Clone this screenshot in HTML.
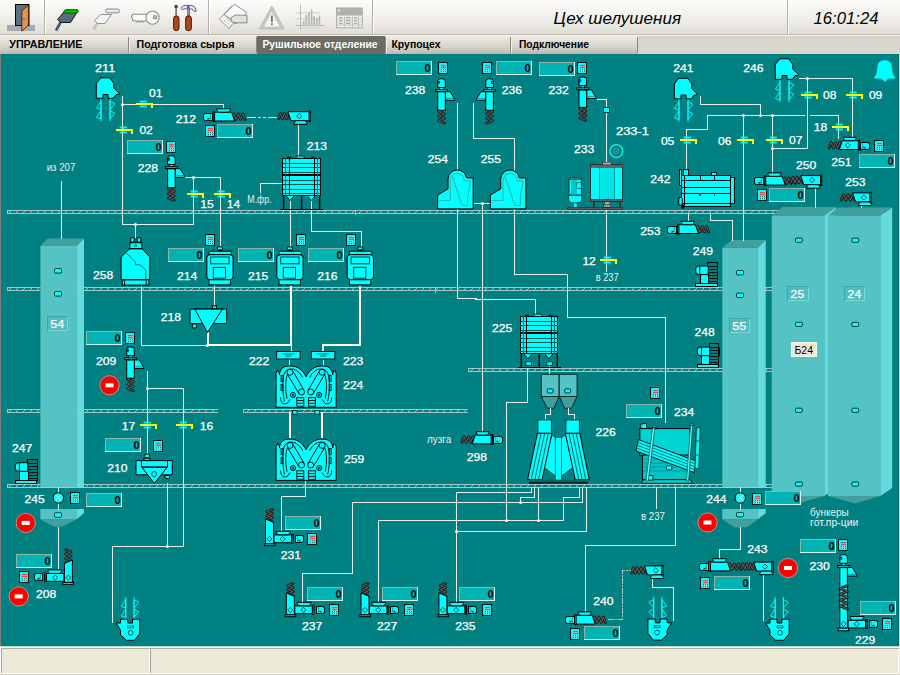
<!DOCTYPE html>
<html><head><meta charset="utf-8"><title>Цех шелушения</title>
<style>html,body{margin:0;padding:0;background:#ECE9D8;overflow:hidden}svg{display:block}text{white-space:pre}</style></head><body>
<svg width="900" height="675" viewBox="0 0 900 675">
<defs><linearGradient id="tb" x1="0" y1="0" x2="0" y2="1"><stop offset="0" stop-color="#FDFCFB"/><stop offset="0.5" stop-color="#F1EFEB"/><stop offset="1" stop-color="#DDDAD2"/></linearGradient><linearGradient id="tab" x1="0" y1="0" x2="0" y2="1"><stop offset="0" stop-color="#EDEBE5"/><stop offset="0.6" stop-color="#D6D3CA"/><stop offset="1" stop-color="#BCB9B0"/></linearGradient><pattern id="hatch0" x="7" y="0" width="7" height="4" patternUnits="userSpaceOnUse"><rect x="2" y="2" width="1" height="1" fill="#A9C6C6"/><rect x="3" y="1" width="1" height="1" fill="#A9C6C6"/></pattern><pattern id="hatch1" x="7" y="1" width="7" height="4" patternUnits="userSpaceOnUse"><rect x="2" y="2" width="1" height="1" fill="#A9C6C6"/><rect x="3" y="1" width="1" height="1" fill="#A9C6C6"/></pattern><pattern id="hatch2" x="7" y="2" width="7" height="4" patternUnits="userSpaceOnUse"><rect x="2" y="2" width="1" height="1" fill="#A9C6C6"/><rect x="3" y="1" width="1" height="1" fill="#A9C6C6"/></pattern><pattern id="hatch3" x="7" y="3" width="7" height="4" patternUnits="userSpaceOnUse"><rect x="2" y="2" width="1" height="1" fill="#A9C6C6"/><rect x="3" y="1" width="1" height="1" fill="#A9C6C6"/></pattern></defs>
<rect x="0" y="0" width="900" height="36" fill="url(#tb)"/>
<rect x="0" y="34" width="900" height="1" fill="#BEBAB0"/><rect x="0" y="35" width="900" height="1" fill="#F4F2EC"/>
<rect x="44" y="0" width="1" height="34" fill="#B4B1A8"/><rect x="45" y="0" width="1" height="34" fill="#FFFFFF"/>
<rect x="208" y="0" width="1" height="34" fill="#B4B1A8"/><rect x="209" y="0" width="1" height="34" fill="#FFFFFF"/>
<rect x="372" y="0" width="1" height="34" fill="#B4B1A8"/><rect x="373" y="0" width="1" height="34" fill="#FFFFFF"/>
<rect x="787" y="0" width="1" height="34" fill="#B4B1A8"/><rect x="788" y="0" width="1" height="34" fill="#FFFFFF"/>
<rect x="0" y="36" width="900" height="18" fill="url(#tab)"/>
<rect x="128" y="37" width="1" height="16" fill="#8C8980"/><rect x="129" y="37" width="1" height="16" fill="#F0EEE8"/>
<rect x="256" y="37" width="1" height="16" fill="#8C8980"/><rect x="257" y="37" width="1" height="16" fill="#F0EEE8"/>
<rect x="385" y="37" width="1" height="16" fill="#8C8980"/><rect x="386" y="37" width="1" height="16" fill="#F0EEE8"/>
<rect x="510" y="37" width="1" height="16" fill="#8C8980"/><rect x="511" y="37" width="1" height="16" fill="#F0EEE8"/>
<rect x="637" y="37" width="1" height="16" fill="#8C8980"/><rect x="638" y="37" width="1" height="16" fill="#F0EEE8"/>
<rect x="638" y="36" width="262" height="18" fill="#D8D5CC"/>
<rect x="257" y="36" width="128" height="18" fill="#6C6B64"/>
<text x="9.2" y="48.1" font-family="Liberation Sans, sans-serif" font-size="10" font-weight="bold" font-style="normal" fill="#000" text-anchor="start" textLength="73.3" lengthAdjust="spacingAndGlyphs">УПРАВЛЕНИЕ</text>
<text x="136.5" y="48.1" font-family="Liberation Sans, sans-serif" font-size="10" font-weight="bold" font-style="normal" fill="#000" text-anchor="start" textLength="98" lengthAdjust="spacingAndGlyphs">Подготовка сырья</text>
<text x="262.5" y="48.1" font-family="Liberation Sans, sans-serif" font-size="10" font-weight="bold" font-style="normal" fill="#fff" text-anchor="start" textLength="115" lengthAdjust="spacingAndGlyphs">Рушильное отделение</text>
<text x="391.5" y="48.1" font-family="Liberation Sans, sans-serif" font-size="10" font-weight="bold" font-style="normal" fill="#000" text-anchor="start" textLength="49" lengthAdjust="spacingAndGlyphs">Крупоцех</text>
<text x="519" y="48.1" font-family="Liberation Sans, sans-serif" font-size="10" font-weight="bold" font-style="normal" fill="#000" text-anchor="start" textLength="70" lengthAdjust="spacingAndGlyphs">Подключение</text>
<text x="553.5" y="23.5" font-family="Liberation Sans, sans-serif" font-size="16.8" font-weight="normal" font-style="italic" fill="#000" text-anchor="start" textLength="127.5" lengthAdjust="spacingAndGlyphs">Цех шелушения</text>
<text x="813.5" y="23.5" font-family="Liberation Sans, sans-serif" font-size="16.8" font-weight="normal" font-style="italic" fill="#000" text-anchor="start" textLength="65" lengthAdjust="spacingAndGlyphs">16:01:24</text>
<rect x="7" y="25" width="28" height="6" fill="#A4ACB4"/>
<rect x="15.5" y="4.5" width="13.5" height="21" fill="#5E7084" stroke="#000" stroke-width="1"/>
<polygon points="21.8,11 28.4,5 28.4,25 21.8,31.2" fill="#E8984C" stroke="#402000" stroke-width="0.9"/>
<circle cx="24.3" cy="19.2" r="1.1" fill="#9CC4D8" stroke="#404040" stroke-width="0.5"/>
<path d="M56,30.5 L61,21.5" stroke="#485868" stroke-width="2.6" fill="none"/>
<polygon points="57.5,19.5 65,10.8 78,10.8 70.5,22.5 61,22.5" fill="#586C7C" stroke="#101820" stroke-width="1"/>
<polygon points="64.2,10.6 66,9.6 77.5,9.6 78.3,11.2 76.8,13.2 63.2,13" fill="#00C000" stroke="#003000" stroke-width="0.7"/>
<path d="M93.5,29.5 L98.5,21.5" stroke="#909090" stroke-width="2.2" fill="none"/><path d="M93.5,29.5 L98.5,21.5" stroke="#fff" stroke-width="0.9" fill="none"/>
<polygon points="94.5,20.5 101,14.5 111.5,14.5 105,23.5 97.5,23.5" fill="#F4F4F4" stroke="#888" stroke-width="0.9"/>
<rect x="105.5" y="9" width="14" height="3.8" rx="1.6" fill="#E8E8E8" stroke="#808080" stroke-width="0.9"/>
<g fill="#FAFAF8" stroke="#8C8C88" stroke-width="1.1"><path d="M131.5,16 L133,14.2 H147 V21 H144 L143,22 L141.5,20.8 L140,22 L138.5,20.8 L137,22 L135.5,20.8 H133 Z"/><circle cx="152.5" cy="17.6" r="6.6"/><circle cx="155" cy="17.2" r="1.7" fill="#C8C8C4"/></g>
<rect x="175.3" y="7" width="1.6" height="9.5" fill="#707070"/><rect x="174.6" y="5" width="3" height="3" fill="#404040"/>
<rect x="173.6" y="16" width="5.4" height="14.6" rx="2.4" fill="#A84A1C" stroke="#401000" stroke-width="0.9"/>
<rect x="187.6" y="9" width="2.2" height="8" fill="#9098A0" stroke="#404040" stroke-width="0.5"/>
<rect x="185.6" y="16" width="5.8" height="14.6" rx="2.4" fill="#A84A1C" stroke="#401000" stroke-width="0.9"/>
<path d="M181,8.2 L183.5,5.4 H192 Q195.8,6.5 196.3,11 L194,11.6 Q193,8.8 190.6,8.8 H184 L182.6,10 Z" fill="#E4E8EC" stroke="#505860" stroke-width="0.9"/><circle cx="188.3" cy="7" r="1.2" fill="#2040E0"/>
<g fill="#FAFAFA" stroke="#808080" stroke-width="0.9"><polygon points="219.5,19 231,6.5 240.5,14 229,28.5"/><polygon points="224,14.5 234.5,4.2 246.8,12.6 236,24"/><path d="M231,17.5 Q236,13.5 240,15.2 L247,15.2 V22.8 H238 Q233.5,23.5 231,21 Z" fill="#E0E0DC"/></g>
<g stroke="#9A9A9A" stroke-width="0.7"><line x1="223.5" y1="19.5" x2="229.5" y2="24.8"/><line x1="225.3" y1="17.4" x2="231.3" y2="22.6"/><line x1="227" y1="15.5" x2="231" y2="19"/></g>
<polygon points="271.8,6 284.2,29 259.4,29" fill="#C6C6C2" stroke="#BCBCB8" stroke-width="1"/><polygon points="271.8,12 279.4,26.4 264.2,26.4" fill="#F4F4F2"/>
<rect x="271" y="15.5" width="1.8" height="6.4" fill="#707070"/><rect x="271" y="23.2" width="1.8" height="1.9" fill="#707070"/>
<g fill="#B8B8B4"><rect x="300" y="4.5" width="1" height="25"/><rect x="296" y="25" width="28.5" height="1"/><rect x="296" y="12.5" width="24" height="0.8" fill="#C8C8C4"/><rect x="296" y="18.5" width="24" height="0.8" fill="#C8C8C4"/><rect x="303" y="21" width="1.6" height="4"/><rect x="305.6" y="15" width="1.6" height="10"/><rect x="308.2" y="12" width="1.6" height="13"/><rect x="310.8" y="9.5" width="1.6" height="15.5"/><rect x="313.4" y="16" width="1.6" height="9"/><rect x="316" y="18" width="1.6" height="7"/><rect x="318.6" y="15.5" width="1.6" height="9.5"/><rect x="302" y="27" width="18" height="1.6" fill="#D4D4D0"/></g>
<rect x="336.5" y="8" width="25.8" height="19.8" fill="#F0F0EE" stroke="#A8A8A4" stroke-width="0.9"/><rect x="336.5" y="8" width="25.8" height="7.5" fill="#B0B0AC"/><rect x="338" y="9.3" width="2.2" height="2.2" fill="#E8E8E4"/>
<g fill="#B8B8B4"><rect x="337" y="18.6" width="25" height="0.8"/><rect x="337" y="21.6" width="25" height="0.8"/><rect x="337" y="24.6" width="25" height="0.8"/><rect x="344" y="15.5" width="0.8" height="12"/><rect x="352" y="15.5" width="0.8" height="12"/><rect x="358" y="15.5" width="0.8" height="12"/></g>
<g fill="#A0A09C"><rect x="339" y="17" width="3.5" height="0.9"/><rect x="346" y="17" width="4.5" height="0.9"/><rect x="354" y="17" width="3" height="0.9"/><rect x="339" y="20" width="3.5" height="0.9"/><rect x="346" y="20" width="4.5" height="0.9"/><rect x="354" y="20" width="3" height="0.9"/><rect x="339" y="23" width="3.5" height="0.9"/><rect x="346" y="23" width="4.5" height="0.9"/><rect x="354" y="23" width="3" height="0.9"/></g>
<rect x="0" y="54" width="900" height="593" fill="#808080"/>
<rect x="1" y="54" width="898" height="593" fill="#008080" />
<rect x="898" y="54" width="1" height="592" fill="#006868"/><rect x="899" y="54" width="1" height="592" fill="#D8D8D0"/>
<g shape-rendering="crispEdges"><rect x="7" y="210" width="783" height="4" fill="url(#hatch2)"/><rect x="7" y="210" width="783" height="1" fill="#A9C6C6"/><rect x="7" y="213" width="783" height="1" fill="#A9C6C6"/><rect x="7" y="210" width="1" height="4" fill="#A9C6C6"/></g>
<g shape-rendering="crispEdges"><rect x="7" y="287" width="765" height="4" fill="url(#hatch3)"/><rect x="7" y="287" width="765" height="1" fill="#A9C6C6"/><rect x="7" y="290" width="765" height="1" fill="#A9C6C6"/><rect x="7" y="287" width="1" height="4" fill="#A9C6C6"/></g>
<g shape-rendering="crispEdges"><rect x="7" y="409" width="211" height="4" fill="url(#hatch1)"/><rect x="7" y="409" width="211" height="1" fill="#A9C6C6"/><rect x="7" y="412" width="211" height="1" fill="#A9C6C6"/><rect x="7" y="409" width="1" height="4" fill="#A9C6C6"/></g>
<g shape-rendering="crispEdges"><rect x="243" y="409" width="225" height="4" fill="url(#hatch1)"/><rect x="243" y="409" width="225" height="1" fill="#A9C6C6"/><rect x="243" y="412" width="225" height="1" fill="#A9C6C6"/><rect x="243" y="409" width="1" height="4" fill="#A9C6C6"/></g>
<g shape-rendering="crispEdges"><rect x="468" y="368" width="304" height="4" fill="url(#hatch0)"/><rect x="468" y="368" width="304" height="1" fill="#A9C6C6"/><rect x="468" y="371" width="304" height="1" fill="#A9C6C6"/><rect x="468" y="368" width="1" height="4" fill="#A9C6C6"/></g>
<g shape-rendering="crispEdges"><rect x="7" y="484" width="765" height="4" fill="url(#hatch0)"/><rect x="7" y="484" width="765" height="1" fill="#A9C6C6"/><rect x="7" y="487" width="765" height="1" fill="#A9C6C6"/><rect x="7" y="484" width="1" height="4" fill="#A9C6C6"/></g>
<rect x="435" y="288" width="1" height="5" fill="#A9C6C6" shape-rendering="crispEdges"/><rect x="355" y="211" width="1" height="4" fill="#A9C6C6" shape-rendering="crispEdges"/>
<polygon points="40.40,246.00 76.50,246.00 76.50,487.00 40.40,487.00" fill="#55C2C4" />
<polygon points="76.50,246.00 84.00,238.50 84.00,487.00 76.50,487.00" fill="#66DADC" />
<polygon points="40.40,246.00 47.40,238.50 84.00,238.50 76.50,246.00" fill="#419FA0" />
<polygon points="722.30,247.70 757.80,247.70 757.80,487.00 722.30,487.00" fill="#55C2C4" />
<polygon points="757.80,247.70 765.70,240.00 765.70,487.00 757.80,487.00" fill="#66DADC" />
<polygon points="722.30,247.70 732.00,240.00 765.70,240.00 757.80,247.70" fill="#419FA0" />
<polygon points="771.70,215.50 824.30,215.50 824.30,496.00 771.70,496.00" fill="#55C2C4" />
<polygon points="824.30,215.50 836.00,207.00 836.00,488.00 824.30,496.00" fill="#66DADC" />
<polygon points="771.70,215.50 782.60,207.00 836.00,207.00 824.30,215.50" fill="#419FA0" />
<polygon points="771.70,496.00 824.30,496.00 798.00,503.50" fill="#419FA0" />
<polygon points="828.00,215.50 880.30,215.50 880.30,496.00 828.00,496.00" fill="#55C2C4" />
<polygon points="880.30,215.50 892.20,207.50 892.20,488.00 880.30,496.00" fill="#66DADC" />
<polygon points="828.00,215.50 838.00,207.50 892.20,207.50 880.30,215.50" fill="#419FA0" />
<polygon points="828.00,496.00 880.30,496.00 855.00,503.50" fill="#419FA0" />
<polygon points="40.40,509.00 76.30,509.00 76.30,519.40 40.40,519.40" fill="#55C2C4" />
<polygon points="76.30,509.00 84.00,509.00 84.00,513.20 76.30,519.40" fill="#66DADC" />
<polygon points="40.40,519.40 76.30,519.40 62.20,526.80 54.40,526.80" fill="#419FA0" />
<polygon points="722.30,509.00 757.80,509.00 757.80,519.20 722.30,519.20" fill="#55C2C4" />
<polygon points="757.80,509.00 765.70,509.00 765.70,513.20 757.80,519.20" fill="#66DADC" />
<polygon points="722.30,519.20 757.80,519.20 747.20,527.20 734.30,527.20" fill="#419FA0" />
<rect x="54.5" y="268.5" width="7" height="4.600000000000023" fill="#00FFFF" stroke="#003838" stroke-width="1" rx="1"/>
<rect x="54.5" y="291.5" width="7" height="4.600000000000023" fill="#00FFFF" stroke="#003838" stroke-width="1" rx="1"/>
<rect x="54.5" y="512.7" width="7" height="4.600000000000023" fill="#00FFFF" stroke="#003838" stroke-width="1" rx="1"/>
<rect x="736.5" y="270.5" width="7" height="4.399999999999977" fill="#00FFFF" stroke="#003838" stroke-width="1" rx="1"/>
<rect x="736.5" y="293.1" width="7" height="4.399999999999977" fill="#00FFFF" stroke="#003838" stroke-width="1" rx="1"/>
<rect x="736.5" y="512.5" width="7" height="4.399999999999977" fill="#00FFFF" stroke="#003838" stroke-width="1" rx="1"/>
<rect x="795.5" y="238.1" width="6.7999999999999545" height="4.199999999999989" fill="#00FFFF" stroke="#003838" stroke-width="1" rx="1"/>
<rect x="795.5" y="322.3" width="6.7999999999999545" height="4.199999999999989" fill="#00FFFF" stroke="#003838" stroke-width="1" rx="1"/>
<rect x="795.5" y="408.2" width="6.7999999999999545" height="4.199999999999989" fill="#00FFFF" stroke="#003838" stroke-width="1" rx="1"/>
<rect x="795.5" y="482.0" width="6.7999999999999545" height="4.199999999999989" fill="#00FFFF" stroke="#003838" stroke-width="1" rx="1"/>
<rect x="851.9" y="238.1" width="6.7999999999999545" height="4.199999999999989" fill="#00FFFF" stroke="#003838" stroke-width="1" rx="1"/>
<rect x="851.9" y="322.3" width="6.7999999999999545" height="4.199999999999989" fill="#00FFFF" stroke="#003838" stroke-width="1" rx="1"/>
<rect x="851.9" y="408.2" width="6.7999999999999545" height="4.199999999999989" fill="#00FFFF" stroke="#003838" stroke-width="1" rx="1"/>
<rect x="851.9" y="482.0" width="6.7999999999999545" height="4.199999999999989" fill="#00FFFF" stroke="#003838" stroke-width="1" rx="1"/>
<rect x="47.5" y="316.5" width="20" height="14" fill="#50BCBE" stroke="#3FA4A6" stroke-width="1" shape-rendering="crispEdges"/>
<rect x="48" y="330" width="20" height="1" fill="#78D8DA" shape-rendering="crispEdges"/><rect x="67" y="317" width="1" height="14" fill="#78D8DA" shape-rendering="crispEdges"/>
<text x="50.6" y="327.6" font-family="Liberation Sans, sans-serif" font-size="10.4" font-weight="normal" fill="#fff" stroke="#fff" stroke-width="0.25" textLength="13.6" lengthAdjust="spacingAndGlyphs">54</text>
<rect x="729.5" y="318.5" width="20" height="14" fill="#50BCBE" stroke="#3FA4A6" stroke-width="1" shape-rendering="crispEdges"/>
<rect x="730" y="332" width="20" height="1" fill="#78D8DA" shape-rendering="crispEdges"/><rect x="749" y="319" width="1" height="14" fill="#78D8DA" shape-rendering="crispEdges"/>
<text x="732.6" y="329.6" font-family="Liberation Sans, sans-serif" font-size="10.4" font-weight="normal" fill="#fff" stroke="#fff" stroke-width="0.25" textLength="13.6" lengthAdjust="spacingAndGlyphs">55</text>
<rect x="787.5" y="286.5" width="21" height="14" fill="#50BCBE" stroke="#3FA4A6" stroke-width="1" shape-rendering="crispEdges"/>
<rect x="788" y="300" width="21" height="1" fill="#78D8DA" shape-rendering="crispEdges"/><rect x="808" y="287" width="1" height="14" fill="#78D8DA" shape-rendering="crispEdges"/>
<text x="790.6" y="297.6" font-family="Liberation Sans, sans-serif" font-size="10.4" font-weight="normal" fill="#fff" stroke="#fff" stroke-width="0.25" textLength="13.6" lengthAdjust="spacingAndGlyphs">25</text>
<rect x="844.5" y="286.5" width="20" height="14" fill="#50BCBE" stroke="#3FA4A6" stroke-width="1" shape-rendering="crispEdges"/>
<rect x="845" y="300" width="20" height="1" fill="#78D8DA" shape-rendering="crispEdges"/><rect x="864" y="287" width="1" height="14" fill="#78D8DA" shape-rendering="crispEdges"/>
<text x="847.6" y="297.6" font-family="Liberation Sans, sans-serif" font-size="10.4" font-weight="normal" fill="#fff" stroke="#fff" stroke-width="0.25" textLength="13.6" lengthAdjust="spacingAndGlyphs">24</text>
<rect x="791.5" y="342.5" width="25" height="14" fill="#ECE9D8" stroke="#F8F8F0" stroke-width="1"/>
<text x="794.5" y="353.8" font-family="Liberation Sans, sans-serif" font-size="10" font-weight="normal" font-style="normal" fill="#000" text-anchor="start" textLength="18.5" lengthAdjust="spacingAndGlyphs">Б24</text>
<polyline points="122.5,96.5 122.5,224.5" fill="none" stroke="#E6F0F0" stroke-width="1" stroke-linecap="square" shape-rendering="crispEdges"/>
<polyline points="122.5,104.5 223.5,104.5 223.5,109.5" fill="none" stroke="#E6F0F0" stroke-width="1" stroke-linecap="square" shape-rendering="crispEdges"/>
<circle cx="122.5" cy="104.5" r="1.5" fill="#fff"/>
<polyline points="122.5,224.5 193.5,224.5 193.5,177.5" fill="none" stroke="#E6F0F0" stroke-width="1" stroke-linecap="square" shape-rendering="crispEdges"/>
<polyline points="185.5,177.5 220.5,177.5 220.5,246.5" fill="none" stroke="#E6F0F0" stroke-width="1" stroke-linecap="square" shape-rendering="crispEdges"/>
<circle cx="193.5" cy="177.5" r="1.5" fill="#fff"/>
<polyline points="135.5,224.5 135.5,237.5" fill="none" stroke="#E6F0F0" stroke-width="1" stroke-linecap="square" shape-rendering="crispEdges"/>
<circle cx="135.5" cy="224.5" r="1.5" fill="#fff"/>
<polyline points="61.5,181.5 61.5,238.5" fill="none" stroke="#E6F0F0" stroke-width="1" stroke-linecap="square" shape-rendering="crispEdges"/>
<polyline points="298.5,124.5 298.5,157.5" fill="none" stroke="#E6F0F0" stroke-width="1" stroke-linecap="square" shape-rendering="crispEdges"/>
<polyline points="260.5,192.5 260.5,183.5 281.5,183.5" fill="none" stroke="#E6F0F0" stroke-width="1" stroke-linecap="square" shape-rendering="crispEdges"/>
<polyline points="290.5,200.5 290.5,246.5" fill="none" stroke="#E6F0F0" stroke-width="1" stroke-linecap="square" shape-rendering="crispEdges"/>
<polyline points="311.5,200.5 311.5,231.5 361.5,231.5 361.5,246.5" fill="none" stroke="#E6F0F0" stroke-width="1" stroke-linecap="square" shape-rendering="crispEdges"/>
<polyline points="214.5,285.5 214.5,305.5" fill="none" stroke="#E6F0F0" stroke-width="1" stroke-linecap="square" shape-rendering="crispEdges"/>
<polyline points="141.5,286.5 141.5,345.5 207.5,345.5" fill="none" stroke="#E6F0F0" stroke-width="1" stroke-linecap="square" shape-rendering="crispEdges"/>
<g fill="#fff" shape-rendering="crispEdges">
<rect x="207" y="332" width="2" height="14"/><rect x="207" y="344" width="85" height="2"/>
<rect x="290" y="286" width="2" height="60"/><rect x="291" y="346" width="1" height="5"/>
<rect x="359" y="286" width="2" height="60"/><rect x="322" y="344" width="39" height="2"/><rect x="322" y="344" width="2" height="7"/>
<rect x="289" y="412" width="2" height="26"/><rect x="321" y="412" width="2" height="26"/>
</g>
<circle cx="207.5" cy="345.5" r="1.5" fill="#fff"/>
<polyline points="289.5,359.5 289.5,365.5" fill="none" stroke="#C8E4E4" stroke-width="1" stroke-linecap="square" shape-rendering="crispEdges"/>
<polyline points="323.5,359.5 323.5,365.5" fill="none" stroke="#C8E4E4" stroke-width="1" stroke-linecap="square" shape-rendering="crispEdges"/>
<polyline points="305.5,481.5 305.5,496.5 281.5,496.5 281.5,531.5" fill="none" stroke="#E6F0F0" stroke-width="1" stroke-linecap="square" shape-rendering="crispEdges"/>
<polyline points="147.5,371.5 147.5,453.5" fill="none" stroke="#E6F0F0" stroke-width="1" stroke-linecap="square" shape-rendering="crispEdges"/>
<polyline points="147.5,388.5 183.5,388.5 183.5,546.5" fill="none" stroke="#E6F0F0" stroke-width="1" stroke-linecap="square" shape-rendering="crispEdges"/>
<circle cx="147.5" cy="388.5" r="1.5" fill="#fff"/>
<polyline points="167.5,483.5 167.5,546.5" fill="none" stroke="#E6F0F0" stroke-width="1" stroke-linecap="square" shape-rendering="crispEdges"/>
<polyline points="183.5,546.5 112.5,546.5 112.5,622.5" fill="none" stroke="#E6F0F0" stroke-width="1" stroke-linecap="square" shape-rendering="crispEdges"/>
<circle cx="167.5" cy="546.5" r="1.5" fill="#fff"/>
<polyline points="58.5,487.5 58.5,509.5" fill="none" stroke="#E6F0F0" stroke-width="1" stroke-linecap="square" shape-rendering="crispEdges"/>
<polyline points="58.5,527.5 58.5,569.5" fill="none" stroke="#E6F0F0" stroke-width="1" stroke-linecap="square" shape-rendering="crispEdges"/>
<polyline points="457.5,103.5 457.5,170.5" fill="none" stroke="#E6F0F0" stroke-width="1" stroke-linecap="square" shape-rendering="crispEdges"/>
<polyline points="457.5,209.5 457.5,298.5 476.5,298.5" fill="none" stroke="#E6F0F0" stroke-width="1" stroke-linecap="square" shape-rendering="crispEdges"/>
<polyline points="475.5,299.5 535.5,299.5 535.5,314.5" fill="none" stroke="#E6F0F0" stroke-width="1" stroke-linecap="square" shape-rendering="crispEdges"/>
<polyline points="473.5,103.5 473.5,138.5 514.5,138.5 514.5,170.5" fill="none" stroke="#E6F0F0" stroke-width="1" stroke-linecap="square" shape-rendering="crispEdges"/>
<polyline points="514.5,209.5 514.5,274.5 567.5,274.5 567.5,317.5 665.5,317.5 665.5,422.5" fill="none" stroke="#E6F0F0" stroke-width="1" stroke-linecap="square" shape-rendering="crispEdges"/>
<polyline points="473.5,203.5 490.5,203.5" fill="none" stroke="#E6F0F0" stroke-width="1" stroke-linecap="square" shape-rendering="crispEdges"/>
<polyline points="482.5,203.5 482.5,431.5" fill="none" stroke="#E6F0F0" stroke-width="1" stroke-linecap="square" shape-rendering="crispEdges"/>
<circle cx="482.5" cy="203.5" r="1.5" fill="#fff"/>
<polyline points="597.5,99.5 606.5,99.5 606.5,162.5" fill="none" stroke="#E6F0F0" stroke-width="1" stroke-linecap="square" shape-rendering="crispEdges"/>
<polyline points="606.5,210.5 606.5,271.5" fill="none" stroke="#E6F0F0" stroke-width="1" stroke-linecap="square" shape-rendering="crispEdges"/>
<rect x="603.5" y="107.5" width="6" height="5" fill="#00FFFF" stroke="#003838" stroke-width="1" shape-rendering="crispEdges"/>
<polyline points="700.5,96.5 700.5,104.5 760.5,104.5 760.5,115.5" fill="none" stroke="#E6F0F0" stroke-width="1" stroke-linecap="square" shape-rendering="crispEdges"/>
<polyline points="707.5,115.5 804.5,115.5" fill="none" stroke="#E6F0F0" stroke-width="1" stroke-linecap="square" shape-rendering="crispEdges"/>
<polyline points="810.5,115.5 838.5,115.5 838.5,138.5" fill="none" stroke="#E6F0F0" stroke-width="1" stroke-linecap="square" shape-rendering="crispEdges"/>
<polyline points="707.5,115.5 707.5,129.5 686.5,129.5 686.5,169.5" fill="none" stroke="#E6F0F0" stroke-width="1" stroke-linecap="square" shape-rendering="crispEdges"/>
<polyline points="743.5,115.5 743.5,240.5" fill="none" stroke="#E6F0F0" stroke-width="1" stroke-linecap="square" shape-rendering="crispEdges"/>
<polyline points="772.5,115.5 772.5,172.5" fill="none" stroke="#E6F0F0" stroke-width="1" stroke-linecap="square" shape-rendering="crispEdges"/>
<polyline points="772.5,148.5 807.5,148.5 807.5,78.5" fill="none" stroke="#E6F0F0" stroke-width="1" stroke-linecap="square" shape-rendering="crispEdges"/>
<polyline points="799.5,78.5 852.5,78.5 852.5,138.5" fill="none" stroke="#E6F0F0" stroke-width="1" stroke-linecap="square" shape-rendering="crispEdges"/>
<circle cx="743.5" cy="115.5" r="1.5" fill="#fff"/>
<circle cx="760.5" cy="115.5" r="1.5" fill="#fff"/>
<circle cx="772.5" cy="115.5" r="1.5" fill="#fff"/>
<circle cx="772.5" cy="148.5" r="1.5" fill="#fff"/>
<circle cx="807.5" cy="78.5" r="1.5" fill="#fff"/>
<polyline points="815.5,187.5 815.5,207.5" fill="none" stroke="#E6F0F0" stroke-width="1" stroke-linecap="square" shape-rendering="crispEdges"/>
<polyline points="861.5,205.5 861.5,207.5" fill="none" stroke="#E6F0F0" stroke-width="1" stroke-linecap="square" shape-rendering="crispEdges"/>
<polyline points="688.5,213.5 688.5,221.5" fill="none" stroke="#E6F0F0" stroke-width="1" stroke-linecap="square" shape-rendering="crispEdges"/>
<polyline points="710.5,213.5 710.5,220.5 732.5,220.5 732.5,240.5" fill="none" stroke="#E6F0F0" stroke-width="1" stroke-linecap="square" shape-rendering="crispEdges"/>
<polyline points="527.5,367.5 527.5,402.5 506.5,402.5 506.5,520.5" fill="none" stroke="#E6F0F0" stroke-width="1" stroke-linecap="square" shape-rendering="crispEdges"/>
<polyline points="549.5,365.5 549.5,374.5" fill="none" stroke="#E6F0F0" stroke-width="1" stroke-linecap="square" shape-rendering="crispEdges"/>
<polyline points="531.5,487.5 531.5,492.5 456.5,492.5 456.5,602.5" fill="none" stroke="#E6F0F0" stroke-width="1" stroke-linecap="square" shape-rendering="crispEdges"/>
<polyline points="534.5,487.5 534.5,497.5 520.5,497.5 520.5,502.5" fill="none" stroke="#E6F0F0" stroke-width="1" stroke-linecap="square" shape-rendering="crispEdges"/>
<polyline points="582.5,487.5 582.5,502.5 352.5,502.5 352.5,573.5 302.5,573.5 302.5,602.5" fill="none" stroke="#E6F0F0" stroke-width="1" stroke-linecap="square" shape-rendering="crispEdges"/>
<polyline points="538.5,487.5 538.5,520.5" fill="none" stroke="#E6F0F0" stroke-width="1" stroke-linecap="square" shape-rendering="crispEdges"/>
<polyline points="579.5,487.5 579.5,497.5 563.5,497.5 563.5,520.5 378.5,520.5 378.5,602.5" fill="none" stroke="#E6F0F0" stroke-width="1" stroke-linecap="square" shape-rendering="crispEdges"/>
<polyline points="586.5,487.5 586.5,531.5 456.5,531.5" fill="none" stroke="#E6F0F0" stroke-width="1" stroke-linecap="square" shape-rendering="crispEdges"/>
<circle cx="520.5" cy="502.5" r="1.5" fill="#fff"/>
<circle cx="538.5" cy="520.5" r="1.5" fill="#fff"/>
<circle cx="506.5" cy="520.5" r="1.5" fill="#fff"/>
<circle cx="456.5" cy="531.5" r="1.5" fill="#fff"/>
<polyline points="656.5,487.5 656.5,508.5" fill="none" stroke="#E6F0F0" stroke-width="1" stroke-linecap="square" shape-rendering="crispEdges"/>
<polyline points="675.5,487.5 675.5,545.5 585.5,545.5 585.5,612.5" fill="none" stroke="#E6F0F0" stroke-width="1" stroke-linecap="square" shape-rendering="crispEdges"/>
<polyline points="608.5,619.5 622.5,619.5 622.5,570.5 630.5,570.5" fill="none" stroke="#A8C8C8" stroke-width="1" stroke-linecap="square" shape-rendering="crispEdges" stroke-dasharray="5,2,1,2"/>
<polyline points="652.5,578.5 652.5,587.5 673.5,587.5 673.5,620.5" fill="none" stroke="#E6F0F0" stroke-width="1" stroke-linecap="square" shape-rendering="crispEdges"/>
<polyline points="740.5,487.5 740.5,509.5" fill="none" stroke="#E6F0F0" stroke-width="1" stroke-linecap="square" shape-rendering="crispEdges"/>
<polyline points="740.5,527.5 740.5,549.5 719.5,549.5 719.5,559.5" fill="none" stroke="#E6F0F0" stroke-width="1" stroke-linecap="square" shape-rendering="crispEdges"/>
<polyline points="763.5,574.5 763.5,620.5" fill="none" stroke="#E6F0F0" stroke-width="1" stroke-linecap="square" shape-rendering="crispEdges"/>
<polyline points="247.5,117.5 277.5,117.5" fill="none" stroke="#C8E0E0" stroke-width="1" stroke-linecap="square" shape-rendering="crispEdges" stroke-dasharray="8,3,2,3,2,3"/>
<g transform="translate(96,77)">
<g stroke="#00FFFF" stroke-width="1" fill="none">
<line x1="5" y1="21.5" x2="5" y2="44"/><line x1="14" y1="21.5" x2="14" y2="44"/>
<polygon points="5,24.0 0.40000000000000036,31.0 5,32.4" />
<polygon points="14,24.0 18.8,26.8 14,32.4" />
<polygon points="5,33.5 0.40000000000000036,40.5 5,41.9" />
<polygon points="14,33.5 18.8,36.3 14,41.9" />
</g>
<polygon points="4.80,0.80 13.80,0.80 17.80,6.40 17.80,11.00 23.30,16.50 22.80,17.50 20.00,17.50 17.50,21.30 12.00,21.30 12.00,17.50 7.00,17.50 7.00,21.30 0.30,21.30 0.30,6.40" fill="#00FFFF" stroke="#000" stroke-width="1" stroke-linejoin="miter" />
</g>
<g transform="translate(674,77.5)">
<g stroke="#00FFFF" stroke-width="1" fill="none">
<line x1="5" y1="21.5" x2="5" y2="44"/><line x1="14" y1="21.5" x2="14" y2="44"/>
<polygon points="5,24.0 0.40000000000000036,31.0 5,32.4" />
<polygon points="14,24.0 18.8,26.8 14,32.4" />
<polygon points="5,33.5 0.40000000000000036,40.5 5,41.9" />
<polygon points="14,33.5 18.8,36.3 14,41.9" />
</g>
<polygon points="4.80,0.80 13.80,0.80 17.80,6.40 17.80,11.00 23.30,16.50 22.80,17.50 20.00,17.50 17.50,21.30 12.00,21.30 12.00,17.50 7.00,17.50 7.00,21.30 0.30,21.30 0.30,6.40" fill="#00FFFF" stroke="#000" stroke-width="1" stroke-linejoin="miter" />
</g>
<g transform="translate(775,58)">
<g stroke="#00FFFF" stroke-width="1" fill="none">
<line x1="5" y1="21.5" x2="5" y2="44"/><line x1="14" y1="21.5" x2="14" y2="44"/>
<polygon points="5,24.0 0.40000000000000036,31.0 5,32.4" />
<polygon points="14,24.0 18.8,26.8 14,32.4" />
<polygon points="5,33.5 0.40000000000000036,40.5 5,41.9" />
<polygon points="14,33.5 18.8,36.3 14,41.9" />
</g>
<polygon points="4.80,0.80 13.80,0.80 17.80,6.40 17.80,11.00 23.30,16.50 22.80,17.50 20.00,17.50 17.50,21.30 12.00,21.30 12.00,17.50 7.00,17.50 7.00,21.30 0.30,21.30 0.30,6.40" fill="#00FFFF" stroke="#000" stroke-width="1" stroke-linejoin="miter" />
</g>
<g transform="translate(116.4,619.2)">
<g stroke="#00FFFF" stroke-width="1" fill="none">
<line x1="9.4" y1="-22.2" x2="9.4" y2="0"/><line x1="17.6" y1="-22.2" x2="17.6" y2="0"/>
<polygon points="9.4,-19.7 4.800000000000001,-12.7 9.4,-11.299999999999999" />
<polygon points="17.6,-19.7 22.400000000000002,-16.9 17.6,-11.299999999999999" />
<polygon points="9.4,-10.2 4.800000000000001,-3.1999999999999993 9.4,-1.799999999999999" />
<polygon points="17.6,-10.2 22.400000000000002,-7.3999999999999995 17.6,-1.799999999999999" />
</g>
<polygon points="4.10,0.00 11.30,0.00 11.30,3.80 16.10,3.80 16.10,0.00 23.40,0.00 23.40,14.40 18.10,21.10 9.90,21.10 4.10,15.80 4.10,11.00 0.00,4.30 0.00,3.80 4.10,3.80" fill="#00FFFF" stroke="#000" stroke-width="1" stroke-linejoin="miter" />
<rect x="11.3" y="6.7" width="5.8" height="2" fill="#00FFFF" stroke="#004848" stroke-width="0.8"/>
<circle cx="14.2" cy="13.6" r="2.4" fill="#00FFFF" stroke="#004848" stroke-width="0.9"/>
</g>
<g transform="translate(671.3,619) scale(-1,1)">
<g stroke="#00FFFF" stroke-width="1" fill="none">
<line x1="9.4" y1="-22.2" x2="9.4" y2="0"/><line x1="17.6" y1="-22.2" x2="17.6" y2="0"/>
<polygon points="9.4,-19.7 4.800000000000001,-12.7 9.4,-11.299999999999999" />
<polygon points="17.6,-19.7 22.400000000000002,-16.9 17.6,-11.299999999999999" />
<polygon points="9.4,-10.2 4.800000000000001,-3.1999999999999993 9.4,-1.799999999999999" />
<polygon points="17.6,-10.2 22.400000000000002,-7.3999999999999995 17.6,-1.799999999999999" />
</g>
<polygon points="4.10,0.00 11.30,0.00 11.30,3.80 16.10,3.80 16.10,0.00 23.40,0.00 23.40,14.40 18.10,21.10 9.90,21.10 4.10,15.80 4.10,11.00 0.00,4.30 0.00,3.80 4.10,3.80" fill="#00FFFF" stroke="#000" stroke-width="1" stroke-linejoin="miter" />
<rect x="11.3" y="6.7" width="5.8" height="2" fill="#00FFFF" stroke="#004848" stroke-width="0.8"/>
<circle cx="14.2" cy="13.6" r="2.4" fill="#00FFFF" stroke="#004848" stroke-width="0.9"/>
</g>
<g transform="translate(765.8,619.2)">
<g stroke="#00FFFF" stroke-width="1" fill="none">
<line x1="9.4" y1="-22.2" x2="9.4" y2="0"/><line x1="17.6" y1="-22.2" x2="17.6" y2="0"/>
<polygon points="9.4,-19.7 4.800000000000001,-12.7 9.4,-11.299999999999999" />
<polygon points="17.6,-19.7 22.400000000000002,-16.9 17.6,-11.299999999999999" />
<polygon points="9.4,-10.2 4.800000000000001,-3.1999999999999993 9.4,-1.799999999999999" />
<polygon points="17.6,-10.2 22.400000000000002,-7.3999999999999995 17.6,-1.799999999999999" />
</g>
<polygon points="4.10,0.00 11.30,0.00 11.30,3.80 16.10,3.80 16.10,0.00 23.40,0.00 23.40,14.40 18.10,21.10 9.90,21.10 4.10,15.80 4.10,11.00 0.00,4.30 0.00,3.80 4.10,3.80" fill="#00FFFF" stroke="#000" stroke-width="1" stroke-linejoin="miter" />
<rect x="11.3" y="6.7" width="5.8" height="2" fill="#00FFFF" stroke="#004848" stroke-width="0.8"/>
<circle cx="14.2" cy="13.6" r="2.4" fill="#00FFFF" stroke="#004848" stroke-width="0.9"/>
</g>
<g transform="translate(167.1,155.3)">
<polyline points="7.20,31.60 1.40,33.83 7.20,36.07 1.40,38.30 7.20,40.53 1.40,42.77 7.20,45.00" fill="none" stroke="#1E1E1E" stroke-width="2.8" stroke-linejoin="round" stroke-linecap="round"/>
<polyline points="7.20,31.60 1.40,33.83 7.20,36.07 1.40,38.30 7.20,40.53 1.40,42.77 7.20,45.00" fill="none" stroke="#8E8E8E" stroke-width="0.55" stroke-linejoin="round"/>
<rect x="0.5" y="13.5" width="7.6" height="19.0" fill="#00FFFF" stroke="#000" stroke-width="1" rx="0"/>
<polygon points="8.30,13.40 13.00,13.40 17.60,21.00 17.60,22.00 8.30,22.00" fill="#00FFFF" stroke="#000" stroke-width="1" stroke-linejoin="miter" />
<polyline points="8.60,20.30 16.80,20.30" fill="none" stroke="#008888" stroke-width="0.8" />
<rect x="-1.7000000000000002" y="11.4" width="12.0" height="1.6999999999999993" fill="#00FFFF" stroke="#000" stroke-width="1" rx="0"/>
<rect x="2.5" y="9" width="3.6" height="2.2" fill="#00FFFF" stroke="#000" stroke-width="0.8"/>
<path d="M0.5,9.2 V3.2 Q0.5,0.5 3.2,0.5 H5.4 Q8.1,0.5 8.1,3.2 V9.2 Z" fill="#00FFFF" stroke="#000" stroke-width="1"/>
<rect x="0.8" y="3.2" width="1.6" height="1.8" fill="#00FFFF" stroke="#000" stroke-width="0.7"/>
</g>
<g transform="translate(437.2,78.3)">
<polyline points="7.20,31.20 1.40,33.45 7.20,35.70 1.40,37.95 7.20,40.20 1.40,42.45 7.20,44.70" fill="none" stroke="#1E1E1E" stroke-width="2.8" stroke-linejoin="round" stroke-linecap="round"/>
<polyline points="7.20,31.20 1.40,33.45 7.20,35.70 1.40,37.95 7.20,40.20 1.40,42.45 7.20,44.70" fill="none" stroke="#8E8E8E" stroke-width="0.55" stroke-linejoin="round"/>
<rect x="0.5" y="13.5" width="7.6" height="18.5" fill="#00FFFF" stroke="#000" stroke-width="1" rx="0"/>
<polygon points="8.30,13.40 13.00,13.40 17.60,21.00 17.60,22.00 8.30,22.00" fill="#00FFFF" stroke="#000" stroke-width="1" stroke-linejoin="miter" />
<polyline points="8.60,20.30 16.80,20.30" fill="none" stroke="#008888" stroke-width="0.8" />
<rect x="-1.7000000000000002" y="11.4" width="12.0" height="1.6999999999999993" fill="#00FFFF" stroke="#000" stroke-width="1" rx="0"/>
<rect x="2.5" y="9" width="3.6" height="2.2" fill="#00FFFF" stroke="#000" stroke-width="0.8"/>
<path d="M0.5,9.2 V3.2 Q0.5,0.5 3.2,0.5 H5.4 Q8.1,0.5 8.1,3.2 V9.2 Z" fill="#00FFFF" stroke="#000" stroke-width="1"/>
<rect x="0.8" y="3.2" width="1.6" height="1.8" fill="#00FFFF" stroke="#000" stroke-width="0.7"/>
</g>
<g transform="translate(493.90000000000003,78.3) scale(-1,1)">
<polyline points="7.20,31.20 1.40,33.45 7.20,35.70 1.40,37.95 7.20,40.20 1.40,42.45 7.20,44.70" fill="none" stroke="#1E1E1E" stroke-width="2.8" stroke-linejoin="round" stroke-linecap="round"/>
<polyline points="7.20,31.20 1.40,33.45 7.20,35.70 1.40,37.95 7.20,40.20 1.40,42.45 7.20,44.70" fill="none" stroke="#8E8E8E" stroke-width="0.55" stroke-linejoin="round"/>
<rect x="0.5" y="13.5" width="7.6" height="18.5" fill="#00FFFF" stroke="#000" stroke-width="1" rx="0"/>
<polygon points="8.30,13.40 13.00,13.40 17.60,21.00 17.60,22.00 8.30,22.00" fill="#00FFFF" stroke="#000" stroke-width="1" stroke-linejoin="miter" />
<polyline points="8.60,20.30 16.80,20.30" fill="none" stroke="#008888" stroke-width="0.8" />
<rect x="-1.7000000000000002" y="11.4" width="12.0" height="1.6999999999999993" fill="#00FFFF" stroke="#000" stroke-width="1" rx="0"/>
<rect x="2.5" y="9" width="3.6" height="2.2" fill="#00FFFF" stroke="#000" stroke-width="0.8"/>
<path d="M0.5,9.2 V3.2 Q0.5,0.5 3.2,0.5 H5.4 Q8.1,0.5 8.1,3.2 V9.2 Z" fill="#00FFFF" stroke="#000" stroke-width="1"/>
<rect x="0.8" y="3.2" width="1.6" height="1.8" fill="#00FFFF" stroke="#000" stroke-width="0.7"/>
</g>
<g transform="translate(578.5,76.5)">
<polyline points="7.20,30.10 1.40,32.37 7.20,34.63 1.40,36.90 7.20,39.17 1.40,41.43 7.20,43.70" fill="none" stroke="#1E1E1E" stroke-width="2.8" stroke-linejoin="round" stroke-linecap="round"/>
<polyline points="7.20,30.10 1.40,32.37 7.20,34.63 1.40,36.90 7.20,39.17 1.40,41.43 7.20,43.70" fill="none" stroke="#8E8E8E" stroke-width="0.55" stroke-linejoin="round"/>
<rect x="0.5" y="13.5" width="7.6" height="17.4" fill="#00FFFF" stroke="#000" stroke-width="1" rx="0"/>
<polygon points="8.30,13.40 13.00,13.40 17.60,21.00 17.60,22.00 8.30,22.00" fill="#00FFFF" stroke="#000" stroke-width="1" stroke-linejoin="miter" />
<polyline points="8.60,20.30 16.80,20.30" fill="none" stroke="#008888" stroke-width="0.8" />
<rect x="-1.7000000000000002" y="11.4" width="12.0" height="1.6999999999999993" fill="#00FFFF" stroke="#000" stroke-width="1" rx="0"/>
<rect x="2.5" y="9" width="3.6" height="2.2" fill="#00FFFF" stroke="#000" stroke-width="0.8"/>
<path d="M0.5,9.2 V3.2 Q0.5,0.5 3.2,0.5 H5.4 Q8.1,0.5 8.1,3.2 V9.2 Z" fill="#00FFFF" stroke="#000" stroke-width="1"/>
<rect x="0.8" y="3.2" width="1.6" height="1.8" fill="#00FFFF" stroke="#000" stroke-width="0.7"/>
</g>
<g transform="translate(126.2,346.5)">
<polyline points="7.20,30.60 1.40,32.90 7.20,35.20 1.40,37.50 7.20,39.80 1.40,42.10 7.20,44.40" fill="none" stroke="#1E1E1E" stroke-width="2.8" stroke-linejoin="round" stroke-linecap="round"/>
<polyline points="7.20,30.60 1.40,32.90 7.20,35.20 1.40,37.50 7.20,39.80 1.40,42.10 7.20,44.40" fill="none" stroke="#8E8E8E" stroke-width="0.55" stroke-linejoin="round"/>
<rect x="0.5" y="13.5" width="7.6" height="18.200000000000003" fill="#00FFFF" stroke="#000" stroke-width="1" rx="0"/>
<polygon points="8.30,13.40 13.00,13.40 17.60,21.00 17.60,22.00 8.30,22.00" fill="#00FFFF" stroke="#000" stroke-width="1" stroke-linejoin="miter" />
<polyline points="8.60,20.30 16.80,20.30" fill="none" stroke="#008888" stroke-width="0.8" />
<rect x="-1.7000000000000002" y="11.4" width="12.0" height="1.6999999999999993" fill="#00FFFF" stroke="#000" stroke-width="1" rx="0"/>
<rect x="2.5" y="9" width="3.6" height="2.2" fill="#00FFFF" stroke="#000" stroke-width="0.8"/>
<path d="M0.5,9.2 V3.2 Q0.5,0.5 3.2,0.5 H5.4 Q8.1,0.5 8.1,3.2 V9.2 Z" fill="#00FFFF" stroke="#000" stroke-width="1"/>
<rect x="0.8" y="3.2" width="1.6" height="1.8" fill="#00FFFF" stroke="#000" stroke-width="0.7"/>
</g>
<g transform="translate(839.3,554.1)">
<rect x="0.5" y="13.5" width="7.6" height="60.400000000000006" fill="#00FFFF" stroke="#000" stroke-width="1" rx="0"/>
<polyline points="8.00,31.50 0.60,34.41 8.00,37.33 0.60,40.24 8.00,43.15 0.60,46.06 8.00,48.98 0.60,51.89 8.00,54.80" fill="none" stroke="#1E1E1E" stroke-width="2.8" stroke-linejoin="round" stroke-linecap="round"/>
<polyline points="8.00,31.50 0.60,34.41 8.00,37.33 0.60,40.24 8.00,43.15 0.60,46.06 8.00,48.98 0.60,51.89 8.00,54.80" fill="none" stroke="#8E8E8E" stroke-width="0.55" stroke-linejoin="round"/>
<polygon points="8.30,13.40 13.00,13.40 17.60,21.00 17.60,22.00 8.30,22.00" fill="#00FFFF" stroke="#000" stroke-width="1" stroke-linejoin="miter" />
<polyline points="8.60,20.30 16.80,20.30" fill="none" stroke="#008888" stroke-width="0.8" />
<rect x="-1.7000000000000002" y="11.4" width="12.0" height="1.6999999999999993" fill="#00FFFF" stroke="#000" stroke-width="1" rx="0"/>
<rect x="2.5" y="9" width="3.6" height="2.2" fill="#00FFFF" stroke="#000" stroke-width="0.8"/>
<path d="M0.5,9.2 V3.2 Q0.5,0.5 3.2,0.5 H5.4 Q8.1,0.5 8.1,3.2 V9.2 Z" fill="#00FFFF" stroke="#000" stroke-width="1"/>
<rect x="0.8" y="3.2" width="1.6" height="1.8" fill="#00FFFF" stroke="#000" stroke-width="0.7"/>
</g>
<rect x="848.1" y="620.2" width="17.399999999999977" height="7.699999999999932" fill="#00FFFF" stroke="#000" stroke-width="1" rx="0"/>
<polygon points="850.20,616.50 863.80,616.50 863.80,617.80 862.00,620.10 852.00,620.10 850.20,617.80" fill="#00FFFF" stroke="#000" stroke-width="1" stroke-linejoin="miter" />
<rect x="838.1" y="628.1" width="10.600000000000023" height="2.699999999999932" fill="#00FFFF" stroke="#000" stroke-width="1" rx="0"/>
<rect x="866.1" y="619.5" width="1.1999999999999318" height="9" fill="#00FFFF" stroke="#000" stroke-width="1" rx="0"/>
<g transform="translate(878.0,620) scale(-1,1)">
<path d="M8.5,0.5 H2.4 Q0.5,0.5 0.5,2.4 V5.6 Q0.5,7.5 2.4,7.5 H8.5 Z" fill="#00FFFF" stroke="#000" stroke-width="1"/>
<path d="M4,7.2 V5.4 H5.8" fill="none" stroke="#002020" stroke-width="1"/>
<polyline points="6.40,0.80 6.40,7.20" fill="none" stroke="#009C9C" stroke-width="0.8" />
</g>
<polygon points="843.50,621.30 846.10,623.90 843.50,626.50 840.90,623.90" fill="#00FFFF" stroke="#004848" stroke-width="0.9" stroke-linejoin="miter" />
<polygon points="856.70,621.30 859.30,623.90 856.70,626.50 854.10,623.90" fill="#00FFFF" stroke="#004848" stroke-width="0.9" stroke-linejoin="miter" />
<g transform="translate(286.3,605.4)">
<polyline points="6.80,-21.80 1.40,-19.78 6.80,-17.77 1.40,-15.75 6.80,-13.73 1.40,-11.72 6.80,-9.70" fill="none" stroke="#1E1E1E" stroke-width="2.8" stroke-linejoin="round" stroke-linecap="round"/>
<polyline points="6.80,-21.80 1.40,-19.78 6.80,-17.77 1.40,-15.75 6.80,-13.73 1.40,-11.72 6.80,-9.70" fill="none" stroke="#8E8E8E" stroke-width="0.55" stroke-linejoin="round"/>
<polygon points="0.00,-12.50 8.00,-9.00 8.00,9.30 0.00,9.30" fill="#00FFFF" stroke="#000" stroke-width="1" stroke-linejoin="miter" />
<rect x="8.5" y="0.5" width="17.5" height="7.800000000000001" fill="#00FFFF" stroke="#000" stroke-width="1" rx="0"/>
<polygon points="10.80,-3.10 24.60,-3.10 24.60,-1.80 22.80,0.40 12.60,0.40 10.80,-1.80" fill="#00FFFF" stroke="#000" stroke-width="1" stroke-linejoin="miter" />
<rect x="-1.1" y="9.5" width="10.6" height="1.8000000000000007" fill="#00FFFF" stroke="#000" stroke-width="1" rx="0"/>
<rect x="26.5" y="-0.09999999999999998" width="1.1999999999999993" height="9.0" fill="#00FFFF" stroke="#000" stroke-width="1" rx="0"/>
<polygon points="4.00,2.00 6.60,4.60 4.00,7.20 1.40,4.60" fill="#00FFFF" stroke="#004848" stroke-width="0.9" stroke-linejoin="miter" />
<polygon points="17.20,2.00 19.80,4.60 17.20,7.20 14.60,4.60" fill="#00FFFF" stroke="#004848" stroke-width="0.9" stroke-linejoin="miter" />
</g>
<g transform="translate(325.0,606) scale(-1,1)">
<path d="M8.5,0.5 H2.4 Q0.5,0.5 0.5,2.4 V5.6 Q0.5,7.5 2.4,7.5 H8.5 Z" fill="#00FFFF" stroke="#000" stroke-width="1"/>
<path d="M4,7.2 V5.4 H5.8" fill="none" stroke="#002020" stroke-width="1"/>
<polyline points="6.40,0.80 6.40,7.20" fill="none" stroke="#009C9C" stroke-width="0.8" />
</g>
<g transform="translate(361,605.4)">
<polyline points="6.80,-21.80 1.40,-19.78 6.80,-17.77 1.40,-15.75 6.80,-13.73 1.40,-11.72 6.80,-9.70" fill="none" stroke="#1E1E1E" stroke-width="2.8" stroke-linejoin="round" stroke-linecap="round"/>
<polyline points="6.80,-21.80 1.40,-19.78 6.80,-17.77 1.40,-15.75 6.80,-13.73 1.40,-11.72 6.80,-9.70" fill="none" stroke="#8E8E8E" stroke-width="0.55" stroke-linejoin="round"/>
<polygon points="0.00,-12.50 8.00,-9.00 8.00,9.30 0.00,9.30" fill="#00FFFF" stroke="#000" stroke-width="1" stroke-linejoin="miter" />
<rect x="8.5" y="0.5" width="17.5" height="7.800000000000001" fill="#00FFFF" stroke="#000" stroke-width="1" rx="0"/>
<polygon points="10.80,-3.10 24.60,-3.10 24.60,-1.80 22.80,0.40 12.60,0.40 10.80,-1.80" fill="#00FFFF" stroke="#000" stroke-width="1" stroke-linejoin="miter" />
<rect x="-1.1" y="9.5" width="10.6" height="1.8000000000000007" fill="#00FFFF" stroke="#000" stroke-width="1" rx="0"/>
<rect x="26.5" y="-0.09999999999999998" width="1.1999999999999993" height="9.0" fill="#00FFFF" stroke="#000" stroke-width="1" rx="0"/>
<polygon points="4.00,2.00 6.60,4.60 4.00,7.20 1.40,4.60" fill="#00FFFF" stroke="#004848" stroke-width="0.9" stroke-linejoin="miter" />
<polygon points="17.20,2.00 19.80,4.60 17.20,7.20 14.60,4.60" fill="#00FFFF" stroke="#004848" stroke-width="0.9" stroke-linejoin="miter" />
</g>
<g transform="translate(399.0,606) scale(-1,1)">
<path d="M8.5,0.5 H2.4 Q0.5,0.5 0.5,2.4 V5.6 Q0.5,7.5 2.4,7.5 H8.5 Z" fill="#00FFFF" stroke="#000" stroke-width="1"/>
<path d="M4,7.2 V5.4 H5.8" fill="none" stroke="#002020" stroke-width="1"/>
<polyline points="6.40,0.80 6.40,7.20" fill="none" stroke="#009C9C" stroke-width="0.8" />
</g>
<g transform="translate(438.9,605.4)">
<polyline points="6.80,-21.80 1.40,-19.78 6.80,-17.77 1.40,-15.75 6.80,-13.73 1.40,-11.72 6.80,-9.70" fill="none" stroke="#1E1E1E" stroke-width="2.8" stroke-linejoin="round" stroke-linecap="round"/>
<polyline points="6.80,-21.80 1.40,-19.78 6.80,-17.77 1.40,-15.75 6.80,-13.73 1.40,-11.72 6.80,-9.70" fill="none" stroke="#8E8E8E" stroke-width="0.55" stroke-linejoin="round"/>
<polygon points="0.00,-12.50 8.00,-9.00 8.00,9.30 0.00,9.30" fill="#00FFFF" stroke="#000" stroke-width="1" stroke-linejoin="miter" />
<rect x="8.5" y="0.5" width="17.5" height="7.800000000000001" fill="#00FFFF" stroke="#000" stroke-width="1" rx="0"/>
<polygon points="10.80,-3.10 24.60,-3.10 24.60,-1.80 22.80,0.40 12.60,0.40 10.80,-1.80" fill="#00FFFF" stroke="#000" stroke-width="1" stroke-linejoin="miter" />
<rect x="-1.1" y="9.5" width="10.6" height="1.8000000000000007" fill="#00FFFF" stroke="#000" stroke-width="1" rx="0"/>
<rect x="26.5" y="-0.09999999999999998" width="1.1999999999999993" height="9.0" fill="#00FFFF" stroke="#000" stroke-width="1" rx="0"/>
<polygon points="4.00,2.00 6.60,4.60 4.00,7.20 1.40,4.60" fill="#00FFFF" stroke="#004848" stroke-width="0.9" stroke-linejoin="miter" />
<polygon points="17.20,2.00 19.80,4.60 17.20,7.20 14.60,4.60" fill="#00FFFF" stroke="#004848" stroke-width="0.9" stroke-linejoin="miter" />
</g>
<g transform="translate(477.0,606) scale(-1,1)">
<path d="M8.5,0.5 H2.4 Q0.5,0.5 0.5,2.4 V5.6 Q0.5,7.5 2.4,7.5 H8.5 Z" fill="#00FFFF" stroke="#000" stroke-width="1"/>
<path d="M4,7.2 V5.4 H5.8" fill="none" stroke="#002020" stroke-width="1"/>
<polyline points="6.40,0.80 6.40,7.20" fill="none" stroke="#009C9C" stroke-width="0.8" />
</g>
<g transform="translate(265.5,534.4)">
<polyline points="6.80,-24.80 1.40,-22.78 6.80,-20.77 1.40,-18.75 6.80,-16.73 1.40,-14.72 6.80,-12.70" fill="none" stroke="#1E1E1E" stroke-width="2.8" stroke-linejoin="round" stroke-linecap="round"/>
<polyline points="6.80,-24.80 1.40,-22.78 6.80,-20.77 1.40,-18.75 6.80,-16.73 1.40,-14.72 6.80,-12.70" fill="none" stroke="#8E8E8E" stroke-width="0.55" stroke-linejoin="round"/>
<polygon points="0.00,-15.50 8.00,-12.00 8.00,9.30 0.00,9.30" fill="#00FFFF" stroke="#000" stroke-width="1" stroke-linejoin="miter" />
<rect x="8.5" y="0.5" width="17.5" height="7.800000000000001" fill="#00FFFF" stroke="#000" stroke-width="1" rx="0"/>
<polygon points="10.80,-3.10 24.60,-3.10 24.60,-1.80 22.80,0.40 12.60,0.40 10.80,-1.80" fill="#00FFFF" stroke="#000" stroke-width="1" stroke-linejoin="miter" />
<rect x="-1.1" y="9.5" width="10.6" height="1.8000000000000007" fill="#00FFFF" stroke="#000" stroke-width="1" rx="0"/>
<rect x="26.5" y="-0.09999999999999998" width="1.1999999999999993" height="9.0" fill="#00FFFF" stroke="#000" stroke-width="1" rx="0"/>
<polygon points="4.00,2.00 6.60,4.60 4.00,7.20 1.40,4.60" fill="#00FFFF" stroke="#004848" stroke-width="0.9" stroke-linejoin="miter" />
<polygon points="17.20,2.00 19.80,4.60 17.20,7.20 14.60,4.60" fill="#00FFFF" stroke="#004848" stroke-width="0.9" stroke-linejoin="miter" />
</g>
<g transform="translate(304.0,535) scale(-1,1)">
<path d="M8.5,0.5 H2.4 Q0.5,0.5 0.5,2.4 V5.6 Q0.5,7.5 2.4,7.5 H8.5 Z" fill="#00FFFF" stroke="#000" stroke-width="1"/>
<path d="M4,7.2 V5.4 H5.8" fill="none" stroke="#002020" stroke-width="1"/>
<polyline points="6.40,0.80 6.40,7.20" fill="none" stroke="#009C9C" stroke-width="0.8" />
</g>
<g transform="translate(72.4,573) scale(-1,1)">
<polyline points="6.80,-23.30 1.40,-21.12 6.80,-18.93 1.40,-16.75 6.80,-14.57 1.40,-12.38 6.80,-10.20" fill="none" stroke="#1E1E1E" stroke-width="2.8" stroke-linejoin="round" stroke-linecap="round"/>
<polyline points="6.80,-23.30 1.40,-21.12 6.80,-18.93 1.40,-16.75 6.80,-14.57 1.40,-12.38 6.80,-10.20" fill="none" stroke="#8E8E8E" stroke-width="0.55" stroke-linejoin="round"/>
<polygon points="0.00,-13.00 8.00,-9.50 8.00,9.30 0.00,9.30" fill="#00FFFF" stroke="#000" stroke-width="1" stroke-linejoin="miter" />
<rect x="8.5" y="0.5" width="17.5" height="7.800000000000001" fill="#00FFFF" stroke="#000" stroke-width="1" rx="0"/>
<polygon points="10.80,-3.10 24.60,-3.10 24.60,-1.80 22.80,0.40 12.60,0.40 10.80,-1.80" fill="#00FFFF" stroke="#000" stroke-width="1" stroke-linejoin="miter" />
<rect x="-1.1" y="9.5" width="10.6" height="1.8000000000000007" fill="#00FFFF" stroke="#000" stroke-width="1" rx="0"/>
<rect x="26.5" y="-0.09999999999999998" width="1.1999999999999993" height="9.0" fill="#00FFFF" stroke="#000" stroke-width="1" rx="0"/>
<polygon points="4.00,2.00 6.60,4.60 4.00,7.20 1.40,4.60" fill="#00FFFF" stroke="#004848" stroke-width="0.9" stroke-linejoin="miter" />
<polygon points="17.20,2.00 19.80,4.60 17.20,7.20 14.60,4.60" fill="#00FFFF" stroke="#004848" stroke-width="0.9" stroke-linejoin="miter" />
</g>
<g transform="translate(34,573)">
<path d="M8.5,0.5 H2.4 Q0.5,0.5 0.5,2.4 V5.6 Q0.5,7.5 2.4,7.5 H8.5 Z" fill="#00FFFF" stroke="#000" stroke-width="1"/>
<path d="M4,7.2 V5.4 H5.8" fill="none" stroke="#002020" stroke-width="1"/>
<polyline points="6.40,0.80 6.40,7.20" fill="none" stroke="#009C9C" stroke-width="0.8" />
</g>
<g transform="translate(203.1,111.8)">
<polyline points="28.70,7.60 30.88,2.10 33.07,7.60 35.25,2.10 37.43,7.60 39.62,2.10 41.80,7.60" fill="none" stroke="#1E1E1E" stroke-width="2.8" stroke-linejoin="round" stroke-linecap="round"/>
<polyline points="28.70,7.60 30.88,2.10 33.07,7.60 35.25,2.10 37.43,7.60 39.62,2.10 41.80,7.60" fill="none" stroke="#8E8E8E" stroke-width="0.55" stroke-linejoin="round"/>
<polygon points="10.50,0.40 28.50,0.40 31.50,9.20 10.50,9.20" fill="#00FFFF" stroke="#000" stroke-width="1" stroke-linejoin="miter" />
<polygon points="13.70,-3.00 27.40,-3.00 27.40,-1.70 25.60,0.40 15.50,0.40 13.70,-1.70" fill="#00FFFF" stroke="#000" stroke-width="1" stroke-linejoin="miter" />
<rect x="10.1" y="-0.09999999999999998" width="1.4000000000000004" height="9.799999999999999" fill="#00FFFF" stroke="#000" stroke-width="1" rx="0"/>
</g>
<g transform="translate(203,113)">
<path d="M9.5,0.5 H2.4 Q0.5,0.5 0.5,2.4 V5.6 Q0.5,7.5 2.4,7.5 H9.5 Z" fill="#00FFFF" stroke="#000" stroke-width="1"/>
<path d="M5,7.2 V5.4 H6.8" fill="none" stroke="#002020" stroke-width="1"/>
<polyline points="7.40,0.80 7.40,7.20" fill="none" stroke="#009C9C" stroke-width="0.8" />
</g>
<g transform="translate(277.4,111.3)">
<polyline points="1.20,7.60 3.13,2.10 5.07,7.60 7.00,2.10 8.93,7.60 10.87,2.10 12.80,7.60" fill="none" stroke="#1E1E1E" stroke-width="2.8" stroke-linejoin="round" stroke-linecap="round"/>
<polyline points="1.20,7.60 3.13,2.10 5.07,7.60 7.00,2.10 8.93,7.60 10.87,2.10 12.80,7.60" fill="none" stroke="#8E8E8E" stroke-width="0.55" stroke-linejoin="round"/>
<polygon points="10.50,0.40 32.00,0.40 32.00,9.40 13.50,9.40" fill="#00FFFF" stroke="#000" stroke-width="1" stroke-linejoin="miter" />
<polygon points="18.50,9.40 27.70,9.40 29.70,11.70 29.70,13.00 16.50,13.00 16.50,11.70" fill="#00FFFF" stroke="#000" stroke-width="1" stroke-linejoin="miter" />
<rect x="31.8" y="-0.30000000000000004" width="1.1999999999999993" height="10.600000000000001" fill="#00FFFF" stroke="#000" stroke-width="1" rx="0"/>
<polygon points="21.80,2.30 24.40,4.90 21.80,7.50 19.20,4.90" fill="#00FFFF" stroke="#004848" stroke-width="0.9" stroke-linejoin="miter" />
</g>
<g transform="translate(869.8,140.3) scale(-1,1)">
<polyline points="27.70,7.60 29.88,2.10 32.07,7.60 34.25,2.10 36.43,7.60 38.62,2.10 40.80,7.60" fill="none" stroke="#1E1E1E" stroke-width="2.8" stroke-linejoin="round" stroke-linecap="round"/>
<polyline points="27.70,7.60 29.88,2.10 32.07,7.60 34.25,2.10 36.43,7.60 38.62,2.10 40.80,7.60" fill="none" stroke="#8E8E8E" stroke-width="0.55" stroke-linejoin="round"/>
<polygon points="10.50,0.40 27.50,0.40 30.50,9.20 10.50,9.20" fill="#00FFFF" stroke="#000" stroke-width="1" stroke-linejoin="miter" />
<polygon points="13.70,-3.00 26.40,-3.00 26.40,-1.70 24.60,0.40 15.50,0.40 13.70,-1.70" fill="#00FFFF" stroke="#000" stroke-width="1" stroke-linejoin="miter" />
<rect x="10.1" y="-0.09999999999999998" width="1.4000000000000004" height="9.799999999999999" fill="#00FFFF" stroke="#000" stroke-width="1" rx="0"/>
</g>
<g transform="translate(870.0,142) scale(-1,1)">
<path d="M9.5,0.5 H2.4 Q0.5,0.5 0.5,2.4 V5.6 Q0.5,7.5 2.4,7.5 H9.5 Z" fill="#00FFFF" stroke="#000" stroke-width="1"/>
<path d="M5,7.2 V5.4 H6.8" fill="none" stroke="#002020" stroke-width="1"/>
<polyline points="7.40,0.80 7.40,7.20" fill="none" stroke="#009C9C" stroke-width="0.8" />
</g>
<polygon points="847.90,142.70 850.50,145.30 847.90,147.90 845.30,145.30" fill="#00FFFF" stroke="#004848" stroke-width="0.9" stroke-linejoin="miter" />
<g transform="translate(754.2,175.9)">
<polyline points="28.20,7.60 30.38,2.10 32.57,7.60 34.75,2.10 36.93,7.60 39.12,2.10 41.30,7.60" fill="none" stroke="#1E1E1E" stroke-width="2.8" stroke-linejoin="round" stroke-linecap="round"/>
<polyline points="28.20,7.60 30.38,2.10 32.57,7.60 34.75,2.10 36.93,7.60 39.12,2.10 41.30,7.60" fill="none" stroke="#8E8E8E" stroke-width="0.55" stroke-linejoin="round"/>
<polygon points="10.50,0.40 28.00,0.40 31.00,9.20 10.50,9.20" fill="#00FFFF" stroke="#000" stroke-width="1" stroke-linejoin="miter" />
<polygon points="13.70,-3.00 26.90,-3.00 26.90,-1.70 25.10,0.40 15.50,0.40 13.70,-1.70" fill="#00FFFF" stroke="#000" stroke-width="1" stroke-linejoin="miter" />
<rect x="10.1" y="-0.09999999999999998" width="1.4000000000000004" height="9.799999999999999" fill="#00FFFF" stroke="#000" stroke-width="1" rx="0"/>
</g>
<g transform="translate(754,177)">
<path d="M9.5,0.5 H2.4 Q0.5,0.5 0.5,2.4 V5.6 Q0.5,7.5 2.4,7.5 H9.5 Z" fill="#00FFFF" stroke="#000" stroke-width="1"/>
<path d="M5,7.2 V5.4 H6.8" fill="none" stroke="#002020" stroke-width="1"/>
<polyline points="7.40,0.80 7.40,7.20" fill="none" stroke="#009C9C" stroke-width="0.8" />
</g>
<g transform="translate(789.7,175.2)">
<polyline points="1.20,7.60 3.22,2.10 5.23,7.60 7.25,2.10 9.27,7.60 11.28,2.10 13.30,7.60" fill="none" stroke="#1E1E1E" stroke-width="2.8" stroke-linejoin="round" stroke-linecap="round"/>
<polyline points="1.20,7.60 3.22,2.10 5.23,7.60 7.25,2.10 9.27,7.60 11.28,2.10 13.30,7.60" fill="none" stroke="#8E8E8E" stroke-width="0.55" stroke-linejoin="round"/>
<polygon points="11.00,0.40 31.00,0.40 31.00,9.40 14.00,9.40" fill="#00FFFF" stroke="#000" stroke-width="1" stroke-linejoin="miter" />
<polygon points="19.00,9.40 28.20,9.40 30.20,11.70 30.20,13.00 17.00,13.00 17.00,11.70" fill="#00FFFF" stroke="#000" stroke-width="1" stroke-linejoin="miter" />
<rect x="30.8" y="-0.30000000000000004" width="1.1999999999999993" height="10.600000000000001" fill="#00FFFF" stroke="#000" stroke-width="1" rx="0"/>
<polygon points="22.30,2.30 24.90,4.90 22.30,7.50 19.70,4.90" fill="#00FFFF" stroke="#004848" stroke-width="0.9" stroke-linejoin="miter" />
</g>
<g transform="translate(667.4,224.3)">
<polyline points="28.20,7.60 30.38,2.10 32.57,7.60 34.75,2.10 36.93,7.60 39.12,2.10 41.30,7.60" fill="none" stroke="#1E1E1E" stroke-width="2.8" stroke-linejoin="round" stroke-linecap="round"/>
<polyline points="28.20,7.60 30.38,2.10 32.57,7.60 34.75,2.10 36.93,7.60 39.12,2.10 41.30,7.60" fill="none" stroke="#8E8E8E" stroke-width="0.55" stroke-linejoin="round"/>
<polygon points="10.50,0.40 28.00,0.40 31.00,9.20 10.50,9.20" fill="#00FFFF" stroke="#000" stroke-width="1" stroke-linejoin="miter" />
<polygon points="13.70,-3.00 26.90,-3.00 26.90,-1.70 25.10,0.40 15.50,0.40 13.70,-1.70" fill="#00FFFF" stroke="#000" stroke-width="1" stroke-linejoin="miter" />
<rect x="10.1" y="-0.09999999999999998" width="1.4000000000000004" height="9.799999999999999" fill="#00FFFF" stroke="#000" stroke-width="1" rx="0"/>
</g>
<g transform="translate(667,226)">
<path d="M9.5,0.5 H2.4 Q0.5,0.5 0.5,2.4 V5.6 Q0.5,7.5 2.4,7.5 H9.5 Z" fill="#00FFFF" stroke="#000" stroke-width="1"/>
<path d="M5,7.2 V5.4 H6.8" fill="none" stroke="#002020" stroke-width="1"/>
<polyline points="7.40,0.80 7.40,7.20" fill="none" stroke="#009C9C" stroke-width="0.8" />
</g>
<g transform="translate(840.1,192.5)">
<polyline points="1.20,7.60 3.47,2.10 5.73,7.60 8.00,2.10 10.27,7.60 12.53,2.10 14.80,7.60" fill="none" stroke="#1E1E1E" stroke-width="2.8" stroke-linejoin="round" stroke-linecap="round"/>
<polyline points="1.20,7.60 3.47,2.10 5.73,7.60 8.00,2.10 10.27,7.60 12.53,2.10 14.80,7.60" fill="none" stroke="#8E8E8E" stroke-width="0.55" stroke-linejoin="round"/>
<polygon points="12.50,0.40 30.10,0.40 30.10,9.40 15.50,9.40" fill="#00FFFF" stroke="#000" stroke-width="1" stroke-linejoin="miter" />
<polygon points="20.50,9.40 29.70,9.40 31.70,11.70 31.70,13.00 18.50,13.00 18.50,11.70" fill="#00FFFF" stroke="#000" stroke-width="1" stroke-linejoin="miter" />
<rect x="29.900000000000002" y="-0.30000000000000004" width="1.1999999999999993" height="10.600000000000001" fill="#00FFFF" stroke="#000" stroke-width="1" rx="0"/>
<polygon points="23.80,2.30 26.40,4.90 23.80,7.50 21.20,4.90" fill="#00FFFF" stroke="#004848" stroke-width="0.9" stroke-linejoin="miter" />
</g>
<g transform="translate(698.9,561.7)">
<polyline points="28.80,7.60 30.98,2.10 33.17,7.60 35.35,2.10 37.53,7.60 39.72,2.10 41.90,7.60" fill="none" stroke="#1E1E1E" stroke-width="2.8" stroke-linejoin="round" stroke-linecap="round"/>
<polyline points="28.80,7.60 30.98,2.10 33.17,7.60 35.35,2.10 37.53,7.60 39.72,2.10 41.90,7.60" fill="none" stroke="#8E8E8E" stroke-width="0.55" stroke-linejoin="round"/>
<polygon points="10.50,0.40 28.60,0.40 31.60,9.20 10.50,9.20" fill="#00FFFF" stroke="#000" stroke-width="1" stroke-linejoin="miter" />
<polygon points="13.70,-3.00 27.50,-3.00 27.50,-1.70 25.70,0.40 15.50,0.40 13.70,-1.70" fill="#00FFFF" stroke="#000" stroke-width="1" stroke-linejoin="miter" />
<rect x="10.1" y="-0.09999999999999998" width="1.4000000000000004" height="9.799999999999999" fill="#00FFFF" stroke="#000" stroke-width="1" rx="0"/>
</g>
<g transform="translate(699,563)">
<path d="M9.5,0.5 H2.4 Q0.5,0.5 0.5,2.4 V5.6 Q0.5,7.5 2.4,7.5 H9.5 Z" fill="#00FFFF" stroke="#000" stroke-width="1"/>
<path d="M5,7.2 V5.4 H6.8" fill="none" stroke="#002020" stroke-width="1"/>
<polyline points="7.40,0.80 7.40,7.20" fill="none" stroke="#009C9C" stroke-width="0.8" />
</g>
<g transform="translate(740,561.7)">
<polyline points="1.20,7.60 3.05,2.10 4.90,7.60 6.75,2.10 8.60,7.60 10.45,2.10 12.30,7.60 14.15,2.10 16.00,7.60" fill="none" stroke="#1E1E1E" stroke-width="2.8" stroke-linejoin="round" stroke-linecap="round"/>
<polyline points="1.20,7.60 3.05,2.10 4.90,7.60 6.75,2.10 8.60,7.60 10.45,2.10 12.30,7.60 14.15,2.10 16.00,7.60" fill="none" stroke="#8E8E8E" stroke-width="0.55" stroke-linejoin="round"/>
<polygon points="13.70,0.40 32.00,0.40 32.00,9.40 16.70,9.40" fill="#00FFFF" stroke="#000" stroke-width="1" stroke-linejoin="miter" />
<polygon points="21.70,9.40 30.90,9.40 32.90,11.70 32.90,13.00 19.70,13.00 19.70,11.70" fill="#00FFFF" stroke="#000" stroke-width="1" stroke-linejoin="miter" />
<rect x="31.8" y="-0.30000000000000004" width="1.1999999999999993" height="10.600000000000001" fill="#00FFFF" stroke="#000" stroke-width="1" rx="0"/>
<polygon points="25.00,2.30 27.60,4.90 25.00,7.50 22.40,4.90" fill="#00FFFF" stroke="#004848" stroke-width="0.9" stroke-linejoin="miter" />
</g>
<g transform="translate(502.7,434.7) scale(-1,1)">
<polyline points="27.70,7.60 29.88,2.10 32.07,7.60 34.25,2.10 36.43,7.60 38.62,2.10 40.80,7.60" fill="none" stroke="#1E1E1E" stroke-width="2.8" stroke-linejoin="round" stroke-linecap="round"/>
<polyline points="27.70,7.60 29.88,2.10 32.07,7.60 34.25,2.10 36.43,7.60 38.62,2.10 40.80,7.60" fill="none" stroke="#8E8E8E" stroke-width="0.55" stroke-linejoin="round"/>
<polygon points="10.50,0.40 27.50,0.40 30.50,9.20 10.50,9.20" fill="#00FFFF" stroke="#000" stroke-width="1" stroke-linejoin="miter" />
<polygon points="13.70,-3.00 26.40,-3.00 26.40,-1.70 24.60,0.40 15.50,0.40 13.70,-1.70" fill="#00FFFF" stroke="#000" stroke-width="1" stroke-linejoin="miter" />
<rect x="10.1" y="-0.09999999999999998" width="1.4000000000000004" height="9.799999999999999" fill="#00FFFF" stroke="#000" stroke-width="1" rx="0"/>
</g>
<g transform="translate(503.0,436) scale(-1,1)">
<path d="M9.5,0.5 H2.4 Q0.5,0.5 0.5,2.4 V5.6 Q0.5,7.5 2.4,7.5 H9.5 Z" fill="#00FFFF" stroke="#000" stroke-width="1"/>
<path d="M5,7.2 V5.4 H6.8" fill="none" stroke="#002020" stroke-width="1"/>
<polyline points="7.40,0.80 7.40,7.20" fill="none" stroke="#009C9C" stroke-width="0.8" />
</g>
<g transform="translate(564.6,614.9)">
<polyline points="27.80,7.60 29.98,2.10 32.17,7.60 34.35,2.10 36.53,7.60 38.72,2.10 40.90,7.60" fill="none" stroke="#1E1E1E" stroke-width="2.8" stroke-linejoin="round" stroke-linecap="round"/>
<polyline points="27.80,7.60 29.98,2.10 32.17,7.60 34.35,2.10 36.53,7.60 38.72,2.10 40.90,7.60" fill="none" stroke="#8E8E8E" stroke-width="0.55" stroke-linejoin="round"/>
<polygon points="10.50,0.40 27.60,0.40 30.60,9.20 10.50,9.20" fill="#00FFFF" stroke="#000" stroke-width="1" stroke-linejoin="miter" />
<polygon points="13.70,-3.00 26.50,-3.00 26.50,-1.70 24.70,0.40 15.50,0.40 13.70,-1.70" fill="#00FFFF" stroke="#000" stroke-width="1" stroke-linejoin="miter" />
<rect x="10.1" y="-0.09999999999999998" width="1.4000000000000004" height="9.799999999999999" fill="#00FFFF" stroke="#000" stroke-width="1" rx="0"/>
</g>
<g transform="translate(565,616)">
<path d="M9.5,0.5 H2.4 Q0.5,0.5 0.5,2.4 V5.6 Q0.5,7.5 2.4,7.5 H9.5 Z" fill="#00FFFF" stroke="#000" stroke-width="1"/>
<path d="M5,7.2 V5.4 H6.8" fill="none" stroke="#002020" stroke-width="1"/>
<polyline points="7.40,0.80 7.40,7.20" fill="none" stroke="#009C9C" stroke-width="0.8" />
</g>
<g transform="translate(630.3,565.5)">
<polyline points="1.20,7.60 3.11,2.10 5.02,7.60 6.94,2.10 8.85,7.60 10.76,2.10 12.67,7.60 14.59,2.10 16.50,7.60" fill="none" stroke="#1E1E1E" stroke-width="2.8" stroke-linejoin="round" stroke-linecap="round"/>
<polyline points="1.20,7.60 3.11,2.10 5.02,7.60 6.94,2.10 8.85,7.60 10.76,2.10 12.67,7.60 14.59,2.10 16.50,7.60" fill="none" stroke="#8E8E8E" stroke-width="0.55" stroke-linejoin="round"/>
<polygon points="14.20,0.40 31.90,0.40 31.90,9.40 17.20,9.40" fill="#00FFFF" stroke="#000" stroke-width="1" stroke-linejoin="miter" />
<polygon points="22.20,9.40 31.40,9.40 33.40,11.70 33.40,13.00 20.20,13.00 20.20,11.70" fill="#00FFFF" stroke="#000" stroke-width="1" stroke-linejoin="miter" />
<rect x="31.7" y="-0.30000000000000004" width="1.1999999999999993" height="10.600000000000001" fill="#00FFFF" stroke="#000" stroke-width="1" rx="0"/>
<polygon points="25.50,2.30 28.10,4.90 25.50,7.50 22.90,4.90" fill="#00FFFF" stroke="#004848" stroke-width="0.9" stroke-linejoin="miter" />
</g>
<g transform="translate(282.6,158.1)">
<g shape-rendering="crispEdges">
<rect x="0.3" y="37" width="1.4" height="14.4" fill="#000" shape-rendering="auto"/>
<rect x="18.3" y="37" width="1.4" height="14.4" fill="#000" shape-rendering="auto"/>
<rect x="36.3" y="37" width="1.4" height="14.4" fill="#000" shape-rendering="auto"/>
<rect x="-2.5" y="50.6" width="43" height="1" fill="#000"/>
<rect x="0" y="0" width="37.6" height="37.4" fill="#00FFFF" stroke="#000" stroke-width="1"/>
<rect x="0" y="4.5" width="37.6" height="1" fill="#005454"/>
<rect x="0" y="9.2" width="37.6" height="1" fill="#005454"/>
<rect x="0" y="13.8" width="37.6" height="1" fill="#005454"/>
<rect x="0" y="21.5" width="37.6" height="1" fill="#005454"/>
<rect x="0" y="26.2" width="37.6" height="1" fill="#005454"/>
<rect x="0" y="30.8" width="37.6" height="1" fill="#005454"/>
<rect x="0" y="35" width="37.6" height="1" fill="#005454"/>
<rect x="0" y="16.2" width="37.6" height="2" fill="#000"/>
<rect x="6" y="0" width="1" height="37.4" fill="#000"/>
<rect x="31" y="0" width="1" height="37.4" fill="#000"/>
<rect x="2.6" y="0" width="1" height="37.4" fill="#006C6C"/><rect x="34.2" y="0" width="1" height="37.4" fill="#006C6C"/>
</g>
<rect x="13.5" y="-2.2" width="8" height="2.4" fill="#00FFFF" stroke="#000" stroke-width="0.8" rx="1"/>
<rect x="4.5" y="-1.5" width="4" height="1.5" fill="#002020"/><rect x="28.5" y="-1.5" width="4" height="1.5" fill="#002020"/>
<polygon points="3.40,37.40 11.80,37.40 7.60,42.60" fill="#00FFFF" stroke="#000" stroke-width="0.9" stroke-linejoin="miter" />
<polygon points="24.40,37.40 32.80,37.40 28.60,42.60" fill="#00FFFF" stroke="#000" stroke-width="0.9" stroke-linejoin="miter" />
</g>
<g transform="translate(520.3,316.3)">
<g shape-rendering="crispEdges">
<rect x="0.3" y="37" width="1.4" height="14.4" fill="#000" shape-rendering="auto"/>
<rect x="18.3" y="37" width="1.4" height="14.4" fill="#000" shape-rendering="auto"/>
<rect x="36.3" y="37" width="1.4" height="14.4" fill="#000" shape-rendering="auto"/>
<rect x="-2.5" y="50.6" width="43" height="1" fill="#000"/>
<rect x="0" y="0" width="37.6" height="37.4" fill="#00FFFF" stroke="#000" stroke-width="1"/>
<rect x="0" y="4.5" width="37.6" height="1" fill="#005454"/>
<rect x="0" y="9.2" width="37.6" height="1" fill="#005454"/>
<rect x="0" y="13.8" width="37.6" height="1" fill="#005454"/>
<rect x="0" y="21.5" width="37.6" height="1" fill="#005454"/>
<rect x="0" y="26.2" width="37.6" height="1" fill="#005454"/>
<rect x="0" y="30.8" width="37.6" height="1" fill="#005454"/>
<rect x="0" y="35" width="37.6" height="1" fill="#005454"/>
<rect x="0" y="16.2" width="37.6" height="2" fill="#000"/>
<rect x="6" y="0" width="1" height="37.4" fill="#000"/>
<rect x="31" y="0" width="1" height="37.4" fill="#000"/>
<rect x="2.6" y="0" width="1" height="37.4" fill="#006C6C"/><rect x="34.2" y="0" width="1" height="37.4" fill="#006C6C"/>
</g>
<rect x="13.5" y="-2.2" width="8" height="2.4" fill="#00FFFF" stroke="#000" stroke-width="0.8" rx="1"/>
<rect x="4.5" y="-1.5" width="4" height="1.5" fill="#002020"/><rect x="28.5" y="-1.5" width="4" height="1.5" fill="#002020"/>
<polygon points="3.40,37.40 11.80,37.40 7.60,42.60" fill="#00FFFF" stroke="#000" stroke-width="0.9" stroke-linejoin="miter" />
<polygon points="24.40,37.40 32.80,37.40 28.60,42.60" fill="#00FFFF" stroke="#000" stroke-width="0.9" stroke-linejoin="miter" />
</g>
<rect x="525.8" y="361.8" width="5.6" height="3.6" fill="#00FFFF" stroke="#003838" stroke-width="0.9"/><rect x="546.8" y="361.8" width="5.6" height="3.6" fill="#00FFFF" stroke="#003838" stroke-width="0.9"/>
<g transform="translate(206.3,246.4)">
<rect x="11.0" y="0.5" width="5.199999999999999" height="3.5" fill="#00FFFF" stroke="#000" stroke-width="1" rx="1"/>
<rect x="12.3" y="3.5" width="2.5999999999999996" height="1" fill="#00FFFF" stroke="#000" stroke-width="1" rx="0"/>
<rect x="2.7" y="4.8" width="22.400000000000002" height="3.3" fill="#00FFFF" stroke="#000" stroke-width="1" rx="1"/>
<rect x="2.7" y="32.5" width="21.400000000000002" height="6" fill="#00FFFF" stroke="#000" stroke-width="1" rx="0"/>
<rect x="0.5" y="8.3" width="26.3" height="25" rx="3.2" fill="#00FFFF" stroke="#000"/>
<rect x="4.4" y="10.6" width="18.4" height="6.8" fill="#00FFFF" stroke="#003838" stroke-width="1"/>
<rect x="7" y="21" width="12.2" height="10.8" fill="#00FFFF" stroke="#003838" stroke-width="1"/>
<polyline points="2.40,33.20 24.40,33.20" fill="none" stroke="#003838" stroke-width="0.9" />
</g>
<g transform="translate(276.3,246.4)">
<rect x="11.0" y="0.5" width="5.199999999999999" height="3.5" fill="#00FFFF" stroke="#000" stroke-width="1" rx="1"/>
<rect x="12.3" y="3.5" width="2.5999999999999996" height="1" fill="#00FFFF" stroke="#000" stroke-width="1" rx="0"/>
<rect x="2.7" y="4.8" width="22.400000000000002" height="3.3" fill="#00FFFF" stroke="#000" stroke-width="1" rx="1"/>
<rect x="2.7" y="32.5" width="21.400000000000002" height="6" fill="#00FFFF" stroke="#000" stroke-width="1" rx="0"/>
<rect x="0.5" y="8.3" width="26.3" height="25" rx="3.2" fill="#00FFFF" stroke="#000"/>
<rect x="4.4" y="10.6" width="18.4" height="6.8" fill="#00FFFF" stroke="#003838" stroke-width="1"/>
<rect x="7" y="21" width="12.2" height="10.8" fill="#00FFFF" stroke="#003838" stroke-width="1"/>
<polyline points="2.40,33.20 24.40,33.20" fill="none" stroke="#003838" stroke-width="0.9" />
</g>
<g transform="translate(346.7,246.4)">
<rect x="11.0" y="0.5" width="5.199999999999999" height="3.5" fill="#00FFFF" stroke="#000" stroke-width="1" rx="1"/>
<rect x="12.3" y="3.5" width="2.5999999999999996" height="1" fill="#00FFFF" stroke="#000" stroke-width="1" rx="0"/>
<rect x="2.7" y="4.8" width="22.400000000000002" height="3.3" fill="#00FFFF" stroke="#000" stroke-width="1" rx="1"/>
<rect x="2.7" y="32.5" width="21.400000000000002" height="6" fill="#00FFFF" stroke="#000" stroke-width="1" rx="0"/>
<rect x="0.5" y="8.3" width="26.3" height="25" rx="3.2" fill="#00FFFF" stroke="#000"/>
<rect x="4.4" y="10.6" width="18.4" height="6.8" fill="#00FFFF" stroke="#003838" stroke-width="1"/>
<rect x="7" y="21" width="12.2" height="10.8" fill="#00FFFF" stroke="#003838" stroke-width="1"/>
<polyline points="2.40,33.20 24.40,33.20" fill="none" stroke="#003838" stroke-width="0.9" />
</g>
<g transform="translate(189.5,308.6)">
<rect x="2.9" y="15.5" width="4.199999999999999" height="3.8000000000000007" fill="#00FFFF" stroke="#000" stroke-width="1" rx="1"/>
<rect x="0.5" y="0.5" width="36.7" height="14.5" fill="#00FFFF" stroke="#000" stroke-width="1" rx="1"/>
<polygon points="5.40,0.50 32.80,0.50 18.00,24.00" fill="#00FFFF" stroke="#000" stroke-width="1" stroke-linejoin="miter" />
<rect x="22.8" y="-2.8" width="4.399999999999999" height="2.9" fill="#00FFFF" stroke="#000" stroke-width="1" rx="0"/>
</g>
<g transform="translate(135.5,460.1)">
<rect x="29.5" y="15.5" width="4.5" height="3" fill="#00FFFF" stroke="#000" stroke-width="1" rx="1"/>
<rect x="0.5" y="0.5" width="36.3" height="14.2" fill="#00FFFF" stroke="#000" stroke-width="1" rx="1"/>
<rect x="9.3" y="-6.0" width="4.799999999999999" height="3.5" fill="#00FFFF" stroke="#000" stroke-width="1" rx="1"/>
<rect x="8.5" y="-1.9" width="6" height="2.2" fill="#00FFFF" stroke="#000" stroke-width="1" rx="0"/>
<polygon points="6.20,7.00 31.70,7.00 18.90,23.30" fill="#00FFFF" stroke="#000" stroke-width="1" stroke-linejoin="miter" />
<polyline points="6.00,1.00 6.00,7.00 32.00,7.00 32.00,1.00" fill="none" stroke="#000" stroke-width="0.9" />
<circle cx="18.7" cy="14" r="2.5" fill="#00FFFF" stroke="#004848" stroke-width="0.9"/>
</g>
<g transform="translate(121.1,237.2)">
<rect x="9.6" y="0.5" width="3.5" height="4.4" fill="#00FFFF" stroke="#000" stroke-width="1" rx="0"/>
<rect x="16.1" y="0.5" width="3.5999999999999996" height="4.4" fill="#00FFFF" stroke="#000" stroke-width="1" rx="0"/>
<rect x="8.8" y="5.5" width="12.0" height="6" fill="#00FFFF" stroke="#000" stroke-width="1" rx="0"/>
<polygon points="14.60,7.20 15.90,8.50 14.60,9.80 13.30,8.50" fill="#00FFFF" stroke="#004848" stroke-width="0.9" stroke-linejoin="miter" />
<polygon points="8.30,11.70 21.30,11.70 28.70,20.00 28.70,42.50 0.00,42.50 0.00,20.00" fill="#00FFFF" stroke="#000" stroke-width="1" stroke-linejoin="miter" />
<polyline points="5.60,16.10 14.50,25.00 14.50,27.50 19.00,27.50 24.70,32.80 24.70,42.00" fill="none" stroke="#005858" stroke-width="0.9" />
<rect x="1.1" y="42.7" width="26.7" height="5.199999999999996" fill="#00FFFF" stroke="#000" stroke-width="1" rx="0"/>
<polyline points="3.50,42.50 3.50,48.00" fill="none" stroke="#000" stroke-width="0.9" />
<polyline points="25.20,42.50 25.20,48.00" fill="none" stroke="#000" stroke-width="0.9" />
</g>
<g transform="translate(437.1,169.9)">
<path d="M0.5,39 V25.2 L10.9,19 V9 A9.3,9.3 0 0 1 29.4,8 H36.1 V39 Z" fill="#00FFFF" stroke="#000" stroke-width="1"/>
<path d="M1.5,30.5 H13.2 V10 A7,7 0 0 1 27,9 V11 H33.5 L30.5,27 V35.5 H25 L15,6" fill="none" stroke="#4C9C9C" stroke-width="0.9"/>
</g>
<g transform="translate(489.8,169.9)">
<path d="M0.5,39 V25.2 L10.9,19 V9 A9.3,9.3 0 0 1 29.4,8 H36.1 V39 Z" fill="#00FFFF" stroke="#000" stroke-width="1"/>
<path d="M1.5,30.5 H13.2 V10 A7,7 0 0 1 27,9 V11 H33.5 L30.5,27 V35.5 H25 L15,6" fill="none" stroke="#4C9C9C" stroke-width="0.9"/>
</g>
<g transform="translate(276.1,351)">
<rect x="0.5" y="0.5" width="23.6" height="7.5" fill="#00FFFF" stroke="#000" stroke-width="1" rx="0"/>
<polyline points="6.00,3.00 18.50,3.00" fill="none" stroke="#006868" stroke-width="0.9" />
<polyline points="9.00,5.00 15.50,5.00" fill="none" stroke="#006868" stroke-width="0.9" />
</g>
<g transform="translate(310.8,351)">
<rect x="0.5" y="0.5" width="23.6" height="7.5" fill="#00FFFF" stroke="#000" stroke-width="1" rx="0"/>
<polyline points="6.00,3.00 18.50,3.00" fill="none" stroke="#006868" stroke-width="0.9" />
<polyline points="9.00,5.00 15.50,5.00" fill="none" stroke="#006868" stroke-width="0.9" />
</g>
<g transform="translate(275.5,365.5)">
<path d="M0.5,41.8 V8 L2.2,4.5 L3.9,8 V9.5 C4.5,2 9,0.5 14.5,0.5 C22,0.5 27,4 30.6,11.2 C34.2,4 39.2,0.5 46.7,0.5 C52.2,0.5 56.7,2 57.300000000000004,9.5 V8 L59.0,4.5 L60.7,8 V41.8 Z" fill="#00FFFF" stroke="#000" stroke-width="1"/>
<g transform="translate(30.6,0) scale(1,1) translate(-30.6,0)" fill="none" stroke="#001C1C" stroke-width="1">
<path d="M9,36 C6.5,25 7,12 9,7.5 C11,3 17,2.5 21,5 C24,7 25.5,9 27,12"/>
<path d="M11.5,33 C9.5,24 10,13 12,9"/>
<circle cx="14.5" cy="6.8" r="3"/><circle cx="26" cy="26.5" r="3"/>
<line x1="12" y1="8.8" x2="23.3" y2="28"/><line x1="17.3" y1="5.5" x2="28.6" y2="24.8"/>
<circle cx="17.5" cy="29.5" r="2.6"/><circle cx="17.5" cy="29.5" r="1"/>
<path d="M5,32 C5,38 9,40 12.5,37 L14.5,34"/>
<rect x="5.6" y="10" width="1.8" height="6"/><rect x="5.6" y="19" width="1.8" height="6"/>
<rect x="21.3" y="32.2" width="7" height="8.5"/><line x1="21.3" y1="35" x2="28.3" y2="35"/><line x1="21.3" y1="37.8" x2="28.3" y2="37.8"/>
</g>
<g transform="translate(30.6,0) scale(-1,1) translate(-30.6,0)" fill="none" stroke="#001C1C" stroke-width="1">
<path d="M9,36 C6.5,25 7,12 9,7.5 C11,3 17,2.5 21,5 C24,7 25.5,9 27,12"/>
<path d="M11.5,33 C9.5,24 10,13 12,9"/>
<circle cx="14.5" cy="6.8" r="3"/><circle cx="26" cy="26.5" r="3"/>
<line x1="12" y1="8.8" x2="23.3" y2="28"/><line x1="17.3" y1="5.5" x2="28.6" y2="24.8"/>
<circle cx="17.5" cy="29.5" r="2.6"/><circle cx="17.5" cy="29.5" r="1"/>
<path d="M5,32 C5,38 9,40 12.5,37 L14.5,34"/>
<rect x="5.6" y="10" width="1.8" height="6"/><rect x="5.6" y="19" width="1.8" height="6"/>
<rect x="21.3" y="32.2" width="7" height="8.5"/><line x1="21.3" y1="35" x2="28.3" y2="35"/><line x1="21.3" y1="37.8" x2="28.3" y2="37.8"/>
</g>
</g>
<g transform="translate(275.5,438.6)">
<path d="M0.5,41.8 V8 L2.2,4.5 L3.9,8 V9.5 C4.5,2 9,0.5 14.5,0.5 C22,0.5 27,4 30.6,11.2 C34.2,4 39.2,0.5 46.7,0.5 C52.2,0.5 56.7,2 57.300000000000004,9.5 V8 L59.0,4.5 L60.7,8 V41.8 Z" fill="#00FFFF" stroke="#000" stroke-width="1"/>
<g transform="translate(30.6,0) scale(1,1) translate(-30.6,0)" fill="none" stroke="#001C1C" stroke-width="1">
<path d="M9,36 C6.5,25 7,12 9,7.5 C11,3 17,2.5 21,5 C24,7 25.5,9 27,12"/>
<path d="M11.5,33 C9.5,24 10,13 12,9"/>
<circle cx="14.5" cy="6.8" r="3"/><circle cx="26" cy="26.5" r="3"/>
<line x1="12" y1="8.8" x2="23.3" y2="28"/><line x1="17.3" y1="5.5" x2="28.6" y2="24.8"/>
<circle cx="17.5" cy="29.5" r="2.6"/><circle cx="17.5" cy="29.5" r="1"/>
<path d="M5,32 C5,38 9,40 12.5,37 L14.5,34"/>
<rect x="5.6" y="10" width="1.8" height="6"/><rect x="5.6" y="19" width="1.8" height="6"/>
<rect x="21.3" y="32.2" width="7" height="8.5"/><line x1="21.3" y1="35" x2="28.3" y2="35"/><line x1="21.3" y1="37.8" x2="28.3" y2="37.8"/>
</g>
<g transform="translate(30.6,0) scale(-1,1) translate(-30.6,0)" fill="none" stroke="#001C1C" stroke-width="1">
<path d="M9,36 C6.5,25 7,12 9,7.5 C11,3 17,2.5 21,5 C24,7 25.5,9 27,12"/>
<path d="M11.5,33 C9.5,24 10,13 12,9"/>
<circle cx="14.5" cy="6.8" r="3"/><circle cx="26" cy="26.5" r="3"/>
<line x1="12" y1="8.8" x2="23.3" y2="28"/><line x1="17.3" y1="5.5" x2="28.6" y2="24.8"/>
<circle cx="17.5" cy="29.5" r="2.6"/><circle cx="17.5" cy="29.5" r="1"/>
<path d="M5,32 C5,38 9,40 12.5,37 L14.5,34"/>
<rect x="5.6" y="10" width="1.8" height="6"/><rect x="5.6" y="19" width="1.8" height="6"/>
<rect x="21.3" y="32.2" width="7" height="8.5"/><line x1="21.3" y1="35" x2="28.3" y2="35"/><line x1="21.3" y1="37.8" x2="28.3" y2="37.8"/>
</g>
</g>
<rect x="292.6" y="410.6" width="4.599999999999966" height="3.6999999999999886" fill="#00FFFF" stroke="#003838" stroke-width="1" rx="0"/>
<rect x="314.8" y="410.6" width="4.800000000000011" height="3.6999999999999886" fill="#00FFFF" stroke="#003838" stroke-width="1" rx="0"/>
<polygon points="541.30,374.30 559.20,374.30 559.20,396.50 541.30,396.50" fill="#55C2C4" stroke="#002828" stroke-width="1" stroke-linejoin="miter" />
<polygon points="541.30,396.50 559.20,396.50 553.80,408.20 547.20,408.20" fill="#419FA0" stroke="#002828" stroke-width="1" stroke-linejoin="miter" />
<rect x="547.3" y="388.8" width="5.7999999999999545" height="4.199999999999989" fill="#00FFFF" stroke="#003838" stroke-width="1" rx="1"/>
<polygon points="559.20,374.30 577.10,374.30 577.10,396.50 559.20,396.50" fill="#55C2C4" stroke="#002828" stroke-width="1" stroke-linejoin="miter" />
<polygon points="559.20,396.50 577.10,396.50 571.60,408.20 564.70,408.20" fill="#419FA0" stroke="#002828" stroke-width="1" stroke-linejoin="miter" />
<rect x="564.8" y="388.8" width="5.7999999999999545" height="4.199999999999989" fill="#00FFFF" stroke="#003838" stroke-width="1" rx="1"/>
<polyline points="550.5,408.5 550.5,414.5 545.5,414.5 545.5,419.5" fill="none" stroke="#E6F0F0" stroke-width="1" stroke-linecap="square" shape-rendering="crispEdges"/>
<polyline points="568.5,408.5 568.5,414.5 574.5,414.5 574.5,419.5" fill="none" stroke="#E6F0F0" stroke-width="1" stroke-linecap="square" shape-rendering="crispEdges"/>
<polygon points="552.00,434.80 555.30,437.40 561.60,437.40 565.30,434.80 575.00,466.00 561.60,476.00 561.60,480.50 555.30,480.50 555.30,476.00 542.50,466.00" fill="#00FFFF" stroke="#003030" stroke-width="0.8" stroke-linejoin="miter" />
<rect x="555.3" y="437.4" width="6.3" height="43" fill="#00FFFF" stroke="#006060" stroke-width="0.8"/>
<polygon points="537.40,433.40 551.90,433.40 542.10,479.60 527.60,479.60" fill="#00FFFF" stroke="#000" stroke-width="1" stroke-linejoin="miter" />
<polyline points="541.02,433.40 531.23,479.60" fill="none" stroke="#006868" stroke-width="1" />
<polyline points="544.65,433.40 534.85,479.60" fill="none" stroke="#006868" stroke-width="1" />
<polyline points="548.27,433.40 538.48,479.60" fill="none" stroke="#006868" stroke-width="1" />
<polygon points="565.40,433.40 579.90,433.40 589.20,479.60 575.20,479.60" fill="#00FFFF" stroke="#000" stroke-width="1" stroke-linejoin="miter" />
<polyline points="569.02,433.40 578.70,479.60" fill="none" stroke="#006868" stroke-width="1" />
<polyline points="572.65,433.40 582.20,479.60" fill="none" stroke="#006868" stroke-width="1" />
<polyline points="576.27,433.40 585.70,479.60" fill="none" stroke="#006868" stroke-width="1" />
<rect x="537.9" y="419.9" width="13.5" height="13.200000000000045" fill="#00FFFF" stroke="#003838" stroke-width="1" rx="0"/>
<rect x="565.9" y="419.9" width="13.5" height="13.200000000000045" fill="#00FFFF" stroke="#003838" stroke-width="1" rx="0"/>
<rect x="528.9" y="479.6" width="58.8" height="3.2" fill="#006464"/><rect x="528.9" y="482.4" width="58.8" height="1.1" fill="#000"/>
<polygon points="640.30,424.50 646.00,423.00 647.20,428.60 641.40,429.40" fill="#00FFFF" stroke="#000" stroke-width="0.9" stroke-linejoin="miter" />
<rect x="639.8" y="428.6" width="50.3" height="27" fill="#00D4D4" stroke="#000" stroke-width="1"/>
<rect x="642.4" y="455" width="46" height="24.7" fill="#00C4C4" stroke="#000" stroke-width="1"/>
<rect x="643" y="458.5" width="45" height="1.6" fill="#00A8A8"/>
<rect x="643" y="462" width="45" height="1.6" fill="#00A8A8"/>
<rect x="643" y="466" width="45" height="1.6" fill="#00A8A8"/>
<rect x="643" y="470" width="45" height="1.6" fill="#00A8A8"/>
<polygon points="644.00,479.70 690.00,479.70 693.00,483.20 641.00,483.20" fill="#00D8D8" stroke="#000" stroke-width="0.8" stroke-linejoin="miter" />
<rect x="647.1" y="475.5" width="5.7999999999999545" height="4.600000000000023" fill="#00FFFF" stroke="#003838" stroke-width="1" rx="0"/>
<rect x="666.4" y="465.7" width="5.399999999999977" height="4.199999999999989" fill="#00FFFF" stroke="#003838" stroke-width="1" rx="1"/>
<polygon points="638.20,439.50 696.00,461.00 694.00,472.50 636.20,451.00" fill="#00FFFF" stroke="#000" stroke-width="0.9" stroke-linejoin="miter" />
<polyline points="637.70,442.38 695.50,463.88" fill="none" stroke="#006868" stroke-width="0.9" />
<polyline points="637.20,445.25 695.00,466.75" fill="none" stroke="#006868" stroke-width="0.9" />
<polyline points="636.70,448.12 694.50,469.62" fill="none" stroke="#006868" stroke-width="0.9" />
<polygon points="652.60,428.00 654.80,428.00 648.20,481.00 646.00,481.00" fill="#80FFFF" stroke="#005050" stroke-width="0.7" stroke-linejoin="miter" />
<polygon points="690.60,425.50 692.60,425.50 688.60,481.00 686.60,481.00" fill="#80FFFF" stroke="#005050" stroke-width="0.7" stroke-linejoin="miter" />
<polygon points="652.00,427.60 654.50,424.80 656.50,427.60" fill="#00FFFF" stroke="#000" stroke-width="0.7" stroke-linejoin="miter" />
<polygon points="689.40,425.40 691.60,422.60 693.80,425.40" fill="#00FFFF" stroke="#000" stroke-width="0.7" stroke-linejoin="miter" />
<polygon points="696.40,427.70 700.20,427.70 698.80,468.60 695.00,468.60" fill="#00FFFF" stroke="#003838" stroke-width="0.9" stroke-linejoin="miter" />
<polyline points="695.50,441.00 700.00,441.00" fill="none" stroke="#003838" stroke-width="0.8" />
<polyline points="695.20,455.00 699.50,455.00" fill="none" stroke="#003838" stroke-width="0.8" />
<g shape-rendering="crispEdges">
<rect x="679.3" y="169.4" width="2.4" height="15.8" fill="#00FFFF" stroke="#000" stroke-width="1"/>
<rect x="683.5" y="169.4" width="4.6" height="6" fill="#00FFFF" stroke="#000" stroke-width="1"/>
<rect x="711" y="172.5" width="5" height="3.5" fill="#00FFFF" stroke="#000" stroke-width="1"/>
<rect x="730.9" y="177.4" width="3.8" height="26.2" fill="#00FFFF" stroke="#000" stroke-width="1"/>
<rect x="681.9" y="175.7" width="49" height="30.6" fill="#00FFFF" stroke="#000" stroke-width="1"/>
<rect x="682" y="180" width="49" height="1" fill="#000"/>
<rect x="682" y="187" width="49" height="1" fill="#000"/>
<rect x="682" y="193" width="49" height="1" fill="#000"/>
<rect x="682" y="202.5" width="49" height="1" fill="#000"/>
<rect x="683.8" y="175.7" width="1" height="30.6" fill="#000"/>
<rect x="699.5" y="176" width="1" height="4" fill="#000"/><rect x="714" y="176" width="1" height="4" fill="#000"/>
<rect x="699" y="193" width="1.6" height="3" fill="#003838"/><rect x="713.6" y="193" width="1.6" height="3" fill="#003838"/>
</g>
<rect x="678.7" y="197.5" width="3.6" height="7.5" rx="1.5" fill="#00FFFF" stroke="#000" stroke-width="1"/>
<ellipse cx="682.6" cy="206.5" rx="1.5" ry="2.6" fill="#000"/>
<g shape-rendering="crispEdges">
<rect x="567.4" y="207.2" width="55.4" height="2.4" fill="#505860" stroke="#282828" stroke-width="0.6"/>
<rect x="593" y="201" width="2" height="6.4" fill="#303838"/><rect x="618.5" y="201" width="2" height="6.4" fill="#303838"/>
<rect x="604.5" y="201.5" width="5" height="2.6" fill="#A0B8B8" stroke="#282828" stroke-width="0.6"/><rect x="603.5" y="204" width="7" height="3" fill="#889C9C" stroke="#282828" stroke-width="0.6"/>
<rect x="590.7" y="164.6" width="32.1" height="36.8" fill="#00FFFF" stroke="#303838" stroke-width="1"/>
<rect x="599.8" y="165" width="14.7" height="36" fill="#00E4E4"/>
<rect x="599.3" y="165" width="0.9" height="36" fill="#009C9C"/><rect x="614.2" y="165" width="0.9" height="36" fill="#009C9C"/>
<rect x="590.7" y="164.6" width="32.1" height="2.4" fill="#586468" stroke="#282828" stroke-width="0.5"/>
<rect x="590.7" y="199" width="32.1" height="2.4" fill="#586468" stroke="#282828" stroke-width="0.5"/>
<rect x="602.9" y="162.1" width="8.5" height="2.6" fill="#B0C0C0" stroke="#282828" stroke-width="0.6"/>
<rect x="619" y="162.2" width="2" height="2.4" fill="#404848"/>
</g>
<rect x="569" y="177.6" width="12.4" height="17.5" rx="1.5" fill="#00FFFF" stroke="#283030" stroke-width="1"/>
<rect x="570" y="177.4" width="10.4" height="2.4" fill="#607074" stroke="#283030" stroke-width="0.5"/>
<rect x="571.5" y="180.5" width="0.9" height="13.5" fill="#007C7C"/>
<rect x="573.5" y="180.5" width="0.9" height="13.5" fill="#007C7C"/>
<rect x="575.5" y="180.5" width="0.9" height="13.5" fill="#007C7C"/>
<rect x="576.6" y="182.5" width="4.6" height="6" rx="1" fill="#00FFFF" stroke="#006868" stroke-width="0.8"/>
<path d="M568.6,195.3 H581.8 V199 Q581.8,203 577,203 H573.4 Q568.6,203 568.6,199 Z" fill="#00FFFF" stroke="#283030" stroke-width="0.9"/>
<rect x="573.4" y="203" width="3.8" height="4.4" fill="#00FFFF" stroke="#283030" stroke-width="0.7"/>
<g transform="translate(14.8,459)">
<g shape-rendering="crispEdges">
<rect x="12.4" y="0.5" width="9.8" height="20.5" fill="#007C7C" stroke="#000" stroke-width="1"/>
<rect x="12.8" y="3.5" width="9.4" height="1" fill="#001414"/>
<rect x="12.8" y="6.5" width="9.4" height="1" fill="#001414"/>
<rect x="12.8" y="9.5" width="9.4" height="1" fill="#001414"/>
<rect x="12.8" y="12.5" width="9.4" height="1" fill="#001414"/>
<rect x="12.8" y="15.5" width="9.4" height="1" fill="#001414"/>
<rect x="12.8" y="18.5" width="9.4" height="1" fill="#001414"/>
<rect x="22.2" y="4" width="1" height="9" fill="#000"/>
<rect x="4.8" y="12" width="8.4" height="9.4" fill="#00FFFF" stroke="#000" stroke-width="1"/>
<rect x="0.7" y="21.3" width="21.4" height="3.2" fill="#00FFFF" stroke="#000" stroke-width="1"/>
</g>
<path d="M13,3.7 H3.4 Q0.5,3.7 0.5,6.6 V9.4 Q0.5,12.3 3.4,12.3 H13 Z" fill="#00FFFF" stroke="#000" stroke-width="1"/>
<polyline points="4.60,4.00 4.60,12.00" fill="none" stroke="#000" stroke-width="0.9" />
</g>
<g transform="translate(695.2,262.3)">
<g shape-rendering="crispEdges">
<rect x="12.4" y="0.5" width="9.8" height="20.5" fill="#007C7C" stroke="#000" stroke-width="1"/>
<rect x="12.8" y="3.5" width="9.4" height="1" fill="#001414"/>
<rect x="12.8" y="6.5" width="9.4" height="1" fill="#001414"/>
<rect x="12.8" y="9.5" width="9.4" height="1" fill="#001414"/>
<rect x="12.8" y="12.5" width="9.4" height="1" fill="#001414"/>
<rect x="12.8" y="15.5" width="9.4" height="1" fill="#001414"/>
<rect x="12.8" y="18.5" width="9.4" height="1" fill="#001414"/>
<rect x="22.2" y="4" width="1" height="9" fill="#000"/>
<rect x="4.8" y="12" width="8.4" height="9.4" fill="#00FFFF" stroke="#000" stroke-width="1"/>
<rect x="0.7" y="21.3" width="21.4" height="3.2" fill="#00FFFF" stroke="#000" stroke-width="1"/>
</g>
<path d="M13,3.7 H3.4 Q0.5,3.7 0.5,6.6 V9.4 Q0.5,12.3 3.4,12.3 H13 Z" fill="#00FFFF" stroke="#000" stroke-width="1"/>
<polyline points="4.60,4.00 4.60,12.00" fill="none" stroke="#000" stroke-width="0.9" />
</g>
<g transform="translate(696.8,343.4)">
<g shape-rendering="crispEdges">
<rect x="12.4" y="0.5" width="9.8" height="20.5" fill="#007C7C" stroke="#000" stroke-width="1"/>
<rect x="12.8" y="3.5" width="9.4" height="1" fill="#001414"/>
<rect x="12.8" y="6.5" width="9.4" height="1" fill="#001414"/>
<rect x="12.8" y="9.5" width="9.4" height="1" fill="#001414"/>
<rect x="12.8" y="12.5" width="9.4" height="1" fill="#001414"/>
<rect x="12.8" y="15.5" width="9.4" height="1" fill="#001414"/>
<rect x="12.8" y="18.5" width="9.4" height="1" fill="#001414"/>
<rect x="22.2" y="4" width="1" height="9" fill="#000"/>
<rect x="4.8" y="12" width="8.4" height="9.4" fill="#00FFFF" stroke="#000" stroke-width="1"/>
<rect x="0.7" y="21.3" width="21.4" height="3.2" fill="#00FFFF" stroke="#000" stroke-width="1"/>
</g>
<path d="M13,3.7 H3.4 Q0.5,3.7 0.5,6.6 V9.4 Q0.5,12.3 3.4,12.3 H13 Z" fill="#00FFFF" stroke="#000" stroke-width="1"/>
<polyline points="4.60,4.00 4.60,12.00" fill="none" stroke="#000" stroke-width="0.9" />
</g>
<circle cx="58.4" cy="497.9" r="5.2" fill="#00FFFF" stroke="#000" stroke-width="1"/>
<path d="M55.176,494.676 L61.623999999999995,501.12399999999997 M61.623999999999995,494.676 L55.176,501.12399999999997" stroke="#fff" stroke-width="1"/>
<circle cx="740.3" cy="498" r="5.2" fill="#00FFFF" stroke="#000" stroke-width="1"/>
<path d="M737.0759999999999,494.776 L743.524,501.224 M743.524,494.776 L737.0759999999999,501.224" stroke="#fff" stroke-width="1"/>
<path d="M884.7,60.3 C889.5,60.3 891.6,62.6 891.9,67 C892.1,71.5 892.6,74.5 895.2,77.6 V78.4 H888.4 L884.8,81.9 L881.2,78.4 H874.2 V77.6 C876.8,74.5 877.3,71.5 877.5,67 C877.8,62.6 879.9,60.3 884.7,60.3 Z" fill="#00FFFF"/>
<circle cx="616.3" cy="151.1" r="6.4" fill="none" stroke="#00FFFF" stroke-width="1.3"/><circle cx="616.3" cy="151.1" r="2.6" fill="none" stroke="#58A8A8" stroke-width="0.9"/><circle cx="616.3" cy="151.1" r="0.8" fill="#58A8A8"/>
<g><rect x="139.6" y="100.6" width="7.2" height="1.8" fill="#00FFFF"/><rect x="139.6" y="105.6" width="7.2" height="1.8" fill="#00FFFF"/><rect x="136" y="103" width="17" height="2" fill="#FFFF00" shape-rendering="crispEdges"/><rect x="151" y="103" width="2" height="5" fill="#FFFF00" shape-rendering="crispEdges"/></g>
<g><rect x="119.6" y="126.6" width="7.2" height="1.8" fill="#00FFFF"/><rect x="119.6" y="131.6" width="7.2" height="1.8" fill="#00FFFF"/><rect x="116" y="129" width="17" height="2" fill="#FFFF00" shape-rendering="crispEdges"/><rect x="131" y="129" width="2" height="5" fill="#FFFF00" shape-rendering="crispEdges"/></g>
<g><rect x="190.6" y="190.6" width="7.2" height="1.8" fill="#00FFFF"/><rect x="190.6" y="195.6" width="7.2" height="1.8" fill="#00FFFF"/><rect x="187" y="193" width="17" height="2" fill="#FFFF00" shape-rendering="crispEdges"/><rect x="202" y="193" width="2" height="5" fill="#FFFF00" shape-rendering="crispEdges"/></g>
<g><rect x="217.6" y="190.6" width="7.2" height="1.8" fill="#00FFFF"/><rect x="217.6" y="195.6" width="7.2" height="1.8" fill="#00FFFF"/><rect x="214" y="193" width="17" height="2" fill="#FFFF00" shape-rendering="crispEdges"/><rect x="229" y="193" width="2" height="5" fill="#FFFF00" shape-rendering="crispEdges"/></g>
<g><rect x="683.6" y="136.6" width="7.2" height="1.8" fill="#00FFFF"/><rect x="683.6" y="141.6" width="7.2" height="1.8" fill="#00FFFF"/><rect x="680" y="139" width="17" height="2" fill="#FFFF00" shape-rendering="crispEdges"/><rect x="695" y="139" width="2" height="5" fill="#FFFF00" shape-rendering="crispEdges"/></g>
<g><rect x="740.6" y="136.6" width="7.2" height="1.8" fill="#00FFFF"/><rect x="740.6" y="141.6" width="7.2" height="1.8" fill="#00FFFF"/><rect x="737" y="139" width="17" height="2" fill="#FFFF00" shape-rendering="crispEdges"/><rect x="752" y="139" width="2" height="5" fill="#FFFF00" shape-rendering="crispEdges"/></g>
<g><rect x="769.6" y="136.6" width="7.2" height="1.8" fill="#00FFFF"/><rect x="769.6" y="141.6" width="7.2" height="1.8" fill="#00FFFF"/><rect x="766" y="139" width="17" height="2" fill="#FFFF00" shape-rendering="crispEdges"/><rect x="781" y="139" width="2" height="5" fill="#FFFF00" shape-rendering="crispEdges"/></g>
<g><rect x="804.6" y="91.6" width="7.2" height="1.8" fill="#00FFFF"/><rect x="804.6" y="96.6" width="7.2" height="1.8" fill="#00FFFF"/><rect x="801" y="94" width="17" height="2" fill="#FFFF00" shape-rendering="crispEdges"/><rect x="816" y="94" width="2" height="5" fill="#FFFF00" shape-rendering="crispEdges"/></g>
<g><rect x="849.6" y="91.6" width="7.2" height="1.8" fill="#00FFFF"/><rect x="849.6" y="96.6" width="7.2" height="1.8" fill="#00FFFF"/><rect x="846" y="94" width="17" height="2" fill="#FFFF00" shape-rendering="crispEdges"/><rect x="861" y="94" width="2" height="5" fill="#FFFF00" shape-rendering="crispEdges"/></g>
<g><rect x="835.6" y="123.6" width="7.2" height="1.8" fill="#00FFFF"/><rect x="835.6" y="128.6" width="7.2" height="1.8" fill="#00FFFF"/><rect x="832" y="126" width="17" height="2" fill="#FFFF00" shape-rendering="crispEdges"/><rect x="847" y="126" width="2" height="5" fill="#FFFF00" shape-rendering="crispEdges"/></g>
<g><rect x="603.6" y="256.6" width="7.2" height="1.8" fill="#00FFFF"/><rect x="603.6" y="261.6" width="7.2" height="1.8" fill="#00FFFF"/><rect x="600" y="259" width="17" height="2" fill="#FFFF00" shape-rendering="crispEdges"/><rect x="615" y="259" width="2" height="5" fill="#FFFF00" shape-rendering="crispEdges"/></g>
<g><rect x="143.6" y="421.6" width="7.2" height="1.8" fill="#00FFFF"/><rect x="143.6" y="426.6" width="7.2" height="1.8" fill="#00FFFF"/><rect x="140" y="424" width="17" height="2" fill="#FFFF00" shape-rendering="crispEdges"/><rect x="155" y="424" width="2" height="5" fill="#FFFF00" shape-rendering="crispEdges"/></g>
<g><rect x="179.6" y="421.6" width="7.2" height="1.8" fill="#00FFFF"/><rect x="179.6" y="426.6" width="7.2" height="1.8" fill="#00FFFF"/><rect x="176" y="424" width="17" height="2" fill="#FFFF00" shape-rendering="crispEdges"/><rect x="191" y="424" width="2" height="5" fill="#FFFF00" shape-rendering="crispEdges"/></g>
<g shape-rendering="crispEdges"><rect x="127" y="140" width="36" height="14" fill="#00B4B4"/><rect x="127" y="140" width="36" height="1" fill="#8FB4AC"/><rect x="127" y="140" width="1" height="14" fill="#8FB4AC"/><rect x="127" y="153" width="36" height="1" fill="#D8F4F4"/><rect x="162" y="140" width="1" height="14" fill="#D8F4F4"/></g>
<text x="161.5" y="150.8" font-family="Liberation Sans, sans-serif" font-size="11" font-weight="bold" fill="#000" text-anchor="end">0</text>
<g shape-rendering="crispEdges"><rect x="217" y="124" width="36" height="14" fill="#00B4B4"/><rect x="217" y="124" width="36" height="1" fill="#8FB4AC"/><rect x="217" y="124" width="1" height="14" fill="#8FB4AC"/><rect x="217" y="137" width="36" height="1" fill="#D8F4F4"/><rect x="252" y="124" width="1" height="14" fill="#D8F4F4"/></g>
<text x="251.5" y="134.8" font-family="Liberation Sans, sans-serif" font-size="11" font-weight="bold" fill="#000" text-anchor="end">0</text>
<g shape-rendering="crispEdges"><rect x="168" y="248" width="36" height="14" fill="#00B4B4"/><rect x="168" y="248" width="36" height="1" fill="#8FB4AC"/><rect x="168" y="248" width="1" height="14" fill="#8FB4AC"/><rect x="168" y="261" width="36" height="1" fill="#D8F4F4"/><rect x="203" y="248" width="1" height="14" fill="#D8F4F4"/></g>
<text x="202.5" y="258.8" font-family="Liberation Sans, sans-serif" font-size="11" font-weight="bold" fill="#000" text-anchor="end">0</text>
<g shape-rendering="crispEdges"><rect x="238" y="248" width="36" height="14" fill="#00B4B4"/><rect x="238" y="248" width="36" height="1" fill="#8FB4AC"/><rect x="238" y="248" width="1" height="14" fill="#8FB4AC"/><rect x="238" y="261" width="36" height="1" fill="#D8F4F4"/><rect x="273" y="248" width="1" height="14" fill="#D8F4F4"/></g>
<text x="272.5" y="258.8" font-family="Liberation Sans, sans-serif" font-size="11" font-weight="bold" fill="#000" text-anchor="end">0</text>
<g shape-rendering="crispEdges"><rect x="308" y="248" width="36" height="14" fill="#00B4B4"/><rect x="308" y="248" width="36" height="1" fill="#8FB4AC"/><rect x="308" y="248" width="1" height="14" fill="#8FB4AC"/><rect x="308" y="261" width="36" height="1" fill="#D8F4F4"/><rect x="343" y="248" width="1" height="14" fill="#D8F4F4"/></g>
<text x="342.5" y="258.8" font-family="Liberation Sans, sans-serif" font-size="11" font-weight="bold" fill="#000" text-anchor="end">0</text>
<g shape-rendering="crispEdges"><rect x="396" y="61" width="36" height="14" fill="#00B4B4"/><rect x="396" y="61" width="36" height="1" fill="#8FB4AC"/><rect x="396" y="61" width="1" height="14" fill="#8FB4AC"/><rect x="396" y="74" width="36" height="1" fill="#D8F4F4"/><rect x="431" y="61" width="1" height="14" fill="#D8F4F4"/></g>
<text x="430.5" y="71.8" font-family="Liberation Sans, sans-serif" font-size="11" font-weight="bold" fill="#000" text-anchor="end">0</text>
<g shape-rendering="crispEdges"><rect x="496" y="61" width="36" height="14" fill="#00B4B4"/><rect x="496" y="61" width="36" height="1" fill="#8FB4AC"/><rect x="496" y="61" width="1" height="14" fill="#8FB4AC"/><rect x="496" y="74" width="36" height="1" fill="#D8F4F4"/><rect x="531" y="61" width="1" height="14" fill="#D8F4F4"/></g>
<text x="530.5" y="71.8" font-family="Liberation Sans, sans-serif" font-size="11" font-weight="bold" fill="#000" text-anchor="end">0</text>
<g shape-rendering="crispEdges"><rect x="539" y="62" width="36" height="14" fill="#00B4B4"/><rect x="539" y="62" width="36" height="1" fill="#8FB4AC"/><rect x="539" y="62" width="1" height="14" fill="#8FB4AC"/><rect x="539" y="75" width="36" height="1" fill="#D8F4F4"/><rect x="574" y="62" width="1" height="14" fill="#D8F4F4"/></g>
<text x="573.5" y="72.8" font-family="Liberation Sans, sans-serif" font-size="11" font-weight="bold" fill="#000" text-anchor="end">0</text>
<g shape-rendering="crispEdges"><rect x="859" y="154" width="36" height="14" fill="#00B4B4"/><rect x="859" y="154" width="36" height="1" fill="#8FB4AC"/><rect x="859" y="154" width="1" height="14" fill="#8FB4AC"/><rect x="859" y="167" width="36" height="1" fill="#D8F4F4"/><rect x="894" y="154" width="1" height="14" fill="#D8F4F4"/></g>
<text x="893.5" y="164.8" font-family="Liberation Sans, sans-serif" font-size="11" font-weight="bold" fill="#000" text-anchor="end">0</text>
<g shape-rendering="crispEdges"><rect x="769" y="188" width="36" height="14" fill="#00B4B4"/><rect x="769" y="188" width="36" height="1" fill="#8FB4AC"/><rect x="769" y="188" width="1" height="14" fill="#8FB4AC"/><rect x="769" y="201" width="36" height="1" fill="#D8F4F4"/><rect x="804" y="188" width="1" height="14" fill="#D8F4F4"/></g>
<text x="803.5" y="198.8" font-family="Liberation Sans, sans-serif" font-size="11" font-weight="bold" fill="#000" text-anchor="end">0</text>
<g shape-rendering="crispEdges"><rect x="86" y="331" width="36" height="14" fill="#00B4B4"/><rect x="86" y="331" width="36" height="1" fill="#8FB4AC"/><rect x="86" y="331" width="1" height="14" fill="#8FB4AC"/><rect x="86" y="344" width="36" height="1" fill="#D8F4F4"/><rect x="121" y="331" width="1" height="14" fill="#D8F4F4"/></g>
<text x="120.5" y="341.8" font-family="Liberation Sans, sans-serif" font-size="11" font-weight="bold" fill="#000" text-anchor="end">0</text>
<g shape-rendering="crispEdges"><rect x="105" y="438" width="36" height="14" fill="#00B4B4"/><rect x="105" y="438" width="36" height="1" fill="#8FB4AC"/><rect x="105" y="438" width="1" height="14" fill="#8FB4AC"/><rect x="105" y="451" width="36" height="1" fill="#D8F4F4"/><rect x="140" y="438" width="1" height="14" fill="#D8F4F4"/></g>
<text x="139.5" y="448.8" font-family="Liberation Sans, sans-serif" font-size="11" font-weight="bold" fill="#000" text-anchor="end">0</text>
<g shape-rendering="crispEdges"><rect x="86" y="493" width="36" height="14" fill="#00B4B4"/><rect x="86" y="493" width="36" height="1" fill="#8FB4AC"/><rect x="86" y="493" width="1" height="14" fill="#8FB4AC"/><rect x="86" y="506" width="36" height="1" fill="#D8F4F4"/><rect x="121" y="493" width="1" height="14" fill="#D8F4F4"/></g>
<text x="120.5" y="503.8" font-family="Liberation Sans, sans-serif" font-size="11" font-weight="bold" fill="#000" text-anchor="end">0</text>
<g shape-rendering="crispEdges"><rect x="16" y="554" width="36" height="14" fill="#00B4B4"/><rect x="16" y="554" width="36" height="1" fill="#8FB4AC"/><rect x="16" y="554" width="1" height="14" fill="#8FB4AC"/><rect x="16" y="567" width="36" height="1" fill="#D8F4F4"/><rect x="51" y="554" width="1" height="14" fill="#D8F4F4"/></g>
<text x="50.5" y="564.8" font-family="Liberation Sans, sans-serif" font-size="11" font-weight="bold" fill="#000" text-anchor="end">0</text>
<g shape-rendering="crispEdges"><rect x="285" y="516" width="36" height="14" fill="#00B4B4"/><rect x="285" y="516" width="36" height="1" fill="#8FB4AC"/><rect x="285" y="516" width="1" height="14" fill="#8FB4AC"/><rect x="285" y="529" width="36" height="1" fill="#D8F4F4"/><rect x="320" y="516" width="1" height="14" fill="#D8F4F4"/></g>
<text x="319.5" y="526.8" font-family="Liberation Sans, sans-serif" font-size="11" font-weight="bold" fill="#000" text-anchor="end">0</text>
<g shape-rendering="crispEdges"><rect x="307" y="587" width="36" height="14" fill="#00B4B4"/><rect x="307" y="587" width="36" height="1" fill="#8FB4AC"/><rect x="307" y="587" width="1" height="14" fill="#8FB4AC"/><rect x="307" y="600" width="36" height="1" fill="#D8F4F4"/><rect x="342" y="587" width="1" height="14" fill="#D8F4F4"/></g>
<text x="341.5" y="597.8" font-family="Liberation Sans, sans-serif" font-size="11" font-weight="bold" fill="#000" text-anchor="end">0</text>
<g shape-rendering="crispEdges"><rect x="382" y="587" width="36" height="14" fill="#00B4B4"/><rect x="382" y="587" width="36" height="1" fill="#8FB4AC"/><rect x="382" y="587" width="1" height="14" fill="#8FB4AC"/><rect x="382" y="600" width="36" height="1" fill="#D8F4F4"/><rect x="417" y="587" width="1" height="14" fill="#D8F4F4"/></g>
<text x="416.5" y="597.8" font-family="Liberation Sans, sans-serif" font-size="11" font-weight="bold" fill="#000" text-anchor="end">0</text>
<g shape-rendering="crispEdges"><rect x="459" y="587" width="36" height="14" fill="#00B4B4"/><rect x="459" y="587" width="36" height="1" fill="#8FB4AC"/><rect x="459" y="587" width="1" height="14" fill="#8FB4AC"/><rect x="459" y="600" width="36" height="1" fill="#D8F4F4"/><rect x="494" y="587" width="1" height="14" fill="#D8F4F4"/></g>
<text x="493.5" y="597.8" font-family="Liberation Sans, sans-serif" font-size="11" font-weight="bold" fill="#000" text-anchor="end">0</text>
<g shape-rendering="crispEdges"><rect x="584" y="626" width="36" height="14" fill="#00B4B4"/><rect x="584" y="626" width="36" height="1" fill="#8FB4AC"/><rect x="584" y="626" width="1" height="14" fill="#8FB4AC"/><rect x="584" y="639" width="36" height="1" fill="#D8F4F4"/><rect x="619" y="626" width="1" height="14" fill="#D8F4F4"/></g>
<text x="618.5" y="636.8" font-family="Liberation Sans, sans-serif" font-size="11" font-weight="bold" fill="#000" text-anchor="end">0</text>
<g shape-rendering="crispEdges"><rect x="626" y="404" width="36" height="14" fill="#00B4B4"/><rect x="626" y="404" width="36" height="1" fill="#8FB4AC"/><rect x="626" y="404" width="1" height="14" fill="#8FB4AC"/><rect x="626" y="417" width="36" height="1" fill="#D8F4F4"/><rect x="661" y="404" width="1" height="14" fill="#D8F4F4"/></g>
<text x="660.5" y="414.8" font-family="Liberation Sans, sans-serif" font-size="11" font-weight="bold" fill="#000" text-anchor="end">0</text>
<g shape-rendering="crispEdges"><rect x="765" y="491" width="36" height="14" fill="#00B4B4"/><rect x="765" y="491" width="36" height="1" fill="#8FB4AC"/><rect x="765" y="491" width="1" height="14" fill="#8FB4AC"/><rect x="765" y="504" width="36" height="1" fill="#D8F4F4"/><rect x="800" y="491" width="1" height="14" fill="#D8F4F4"/></g>
<text x="799.5" y="501.8" font-family="Liberation Sans, sans-serif" font-size="11" font-weight="bold" fill="#000" text-anchor="end">0</text>
<g shape-rendering="crispEdges"><rect x="714" y="576" width="36" height="14" fill="#00B4B4"/><rect x="714" y="576" width="36" height="1" fill="#8FB4AC"/><rect x="714" y="576" width="1" height="14" fill="#8FB4AC"/><rect x="714" y="589" width="36" height="1" fill="#D8F4F4"/><rect x="749" y="576" width="1" height="14" fill="#D8F4F4"/></g>
<text x="748.5" y="586.8" font-family="Liberation Sans, sans-serif" font-size="11" font-weight="bold" fill="#000" text-anchor="end">0</text>
<g shape-rendering="crispEdges"><rect x="800" y="539" width="36" height="14" fill="#00B4B4"/><rect x="800" y="539" width="36" height="1" fill="#8FB4AC"/><rect x="800" y="539" width="1" height="14" fill="#8FB4AC"/><rect x="800" y="552" width="36" height="1" fill="#D8F4F4"/><rect x="835" y="539" width="1" height="14" fill="#D8F4F4"/></g>
<text x="834.5" y="549.8" font-family="Liberation Sans, sans-serif" font-size="11" font-weight="bold" fill="#000" text-anchor="end">0</text>
<g shape-rendering="crispEdges"><rect x="860" y="601" width="36" height="14" fill="#00B4B4"/><rect x="860" y="601" width="36" height="1" fill="#8FB4AC"/><rect x="860" y="601" width="1" height="14" fill="#8FB4AC"/><rect x="860" y="614" width="36" height="1" fill="#D8F4F4"/><rect x="895" y="601" width="1" height="14" fill="#D8F4F4"/></g>
<text x="894.5" y="611.8" font-family="Liberation Sans, sans-serif" font-size="11" font-weight="bold" fill="#000" text-anchor="end">0</text>
<g shape-rendering="crispEdges"><rect x="166.5" y="141.5" width="9" height="11" fill="#00FFFF" stroke="#001818"/><rect x="169" y="144" width="5" height="3" fill="#E84848"/><rect x="169" y="145" width="5" height="1" fill="#F09090"/><rect x="169" y="148" width="5" height="3" fill="#208080"/><rect x="170" y="148" width="1" height="3" fill="#A0F0F0"/><rect x="172" y="148" width="1" height="3" fill="#A0F0F0"/><rect x="169" y="149" width="5" height="1" fill="#60D8D8"/></g>
<g shape-rendering="crispEdges"><rect x="205.5" y="125.5" width="9" height="11" fill="#00FFFF" stroke="#001818"/><rect x="208" y="128" width="5" height="3" fill="#E84848"/><rect x="208" y="129" width="5" height="1" fill="#F09090"/><rect x="208" y="132" width="5" height="3" fill="#208080"/><rect x="209" y="132" width="1" height="3" fill="#A0F0F0"/><rect x="211" y="132" width="1" height="3" fill="#A0F0F0"/><rect x="208" y="133" width="5" height="1" fill="#60D8D8"/></g>
<g shape-rendering="crispEdges"><rect x="205.5" y="234.5" width="9" height="11" fill="#00FFFF" stroke="#001818"/><rect x="208" y="237" width="5" height="3" fill="#E84848"/><rect x="208" y="238" width="5" height="1" fill="#F09090"/><rect x="208" y="241" width="5" height="3" fill="#208080"/><rect x="209" y="241" width="1" height="3" fill="#A0F0F0"/><rect x="211" y="241" width="1" height="3" fill="#A0F0F0"/><rect x="208" y="242" width="5" height="1" fill="#60D8D8"/></g>
<g shape-rendering="crispEdges"><rect x="296.5" y="234.5" width="9" height="11" fill="#00FFFF" stroke="#001818"/><rect x="299" y="237" width="5" height="3" fill="#E84848"/><rect x="299" y="238" width="5" height="1" fill="#F09090"/><rect x="299" y="241" width="5" height="3" fill="#208080"/><rect x="300" y="241" width="1" height="3" fill="#A0F0F0"/><rect x="302" y="241" width="1" height="3" fill="#A0F0F0"/><rect x="299" y="242" width="5" height="1" fill="#60D8D8"/></g>
<g shape-rendering="crispEdges"><rect x="346.5" y="234.5" width="9" height="11" fill="#00FFFF" stroke="#001818"/><rect x="349" y="237" width="5" height="3" fill="#E84848"/><rect x="349" y="238" width="5" height="1" fill="#F09090"/><rect x="349" y="241" width="5" height="3" fill="#208080"/><rect x="350" y="241" width="1" height="3" fill="#A0F0F0"/><rect x="352" y="241" width="1" height="3" fill="#A0F0F0"/><rect x="349" y="242" width="5" height="1" fill="#60D8D8"/></g>
<g shape-rendering="crispEdges"><rect x="438.5" y="62.5" width="9" height="11" fill="#00FFFF" stroke="#001818"/><rect x="441" y="65" width="5" height="3" fill="#E84848"/><rect x="441" y="66" width="5" height="1" fill="#F09090"/><rect x="441" y="69" width="5" height="3" fill="#208080"/><rect x="442" y="69" width="1" height="3" fill="#A0F0F0"/><rect x="444" y="69" width="1" height="3" fill="#A0F0F0"/><rect x="441" y="70" width="5" height="1" fill="#60D8D8"/></g>
<g shape-rendering="crispEdges"><rect x="482.5" y="62.5" width="9" height="11" fill="#00FFFF" stroke="#001818"/><rect x="485" y="65" width="5" height="3" fill="#E84848"/><rect x="485" y="66" width="5" height="1" fill="#F09090"/><rect x="485" y="69" width="5" height="3" fill="#208080"/><rect x="486" y="69" width="1" height="3" fill="#A0F0F0"/><rect x="488" y="69" width="1" height="3" fill="#A0F0F0"/><rect x="485" y="70" width="5" height="1" fill="#60D8D8"/></g>
<g shape-rendering="crispEdges"><rect x="577.5" y="62.5" width="9" height="11" fill="#00FFFF" stroke="#001818"/><rect x="580" y="65" width="5" height="3" fill="#E84848"/><rect x="580" y="66" width="5" height="1" fill="#F09090"/><rect x="580" y="69" width="5" height="3" fill="#208080"/><rect x="581" y="69" width="1" height="3" fill="#A0F0F0"/><rect x="583" y="69" width="1" height="3" fill="#A0F0F0"/><rect x="580" y="70" width="5" height="1" fill="#60D8D8"/></g>
<g shape-rendering="crispEdges"><rect x="874.5" y="140.5" width="9" height="11" fill="#00FFFF" stroke="#001818"/><rect x="877" y="143" width="5" height="3" fill="#E84848"/><rect x="877" y="144" width="5" height="1" fill="#F09090"/><rect x="877" y="147" width="5" height="3" fill="#208080"/><rect x="878" y="147" width="1" height="3" fill="#A0F0F0"/><rect x="880" y="147" width="1" height="3" fill="#A0F0F0"/><rect x="877" y="148" width="5" height="1" fill="#60D8D8"/></g>
<g shape-rendering="crispEdges"><rect x="757.5" y="189.5" width="9" height="11" fill="#00FFFF" stroke="#001818"/><rect x="760" y="192" width="5" height="3" fill="#E84848"/><rect x="760" y="193" width="5" height="1" fill="#F09090"/><rect x="760" y="196" width="5" height="3" fill="#208080"/><rect x="761" y="196" width="1" height="3" fill="#A0F0F0"/><rect x="763" y="196" width="1" height="3" fill="#A0F0F0"/><rect x="760" y="197" width="5" height="1" fill="#60D8D8"/></g>
<g shape-rendering="crispEdges"><rect x="125.5" y="332.5" width="9" height="11" fill="#00FFFF" stroke="#001818"/><rect x="128" y="335" width="5" height="3" fill="#E84848"/><rect x="128" y="336" width="5" height="1" fill="#F09090"/><rect x="128" y="339" width="5" height="3" fill="#208080"/><rect x="129" y="339" width="1" height="3" fill="#A0F0F0"/><rect x="131" y="339" width="1" height="3" fill="#A0F0F0"/><rect x="128" y="340" width="5" height="1" fill="#60D8D8"/></g>
<g shape-rendering="crispEdges"><rect x="153.5" y="440.5" width="9" height="11" fill="#00FFFF" stroke="#001818"/><rect x="156" y="443" width="5" height="3" fill="#E84848"/><rect x="156" y="444" width="5" height="1" fill="#F09090"/><rect x="156" y="447" width="5" height="3" fill="#208080"/><rect x="157" y="447" width="1" height="3" fill="#A0F0F0"/><rect x="159" y="447" width="1" height="3" fill="#A0F0F0"/><rect x="156" y="448" width="5" height="1" fill="#60D8D8"/></g>
<g shape-rendering="crispEdges"><rect x="70.5" y="492.5" width="9" height="11" fill="#00FFFF" stroke="#001818"/><rect x="73" y="495" width="5" height="3" fill="#E84848"/><rect x="73" y="496" width="5" height="1" fill="#F09090"/><rect x="73" y="499" width="5" height="3" fill="#208080"/><rect x="74" y="499" width="1" height="3" fill="#A0F0F0"/><rect x="76" y="499" width="1" height="3" fill="#A0F0F0"/><rect x="73" y="500" width="5" height="1" fill="#60D8D8"/></g>
<g shape-rendering="crispEdges"><rect x="19.5" y="571.5" width="9" height="11" fill="#00FFFF" stroke="#001818"/><rect x="22" y="574" width="5" height="3" fill="#E84848"/><rect x="22" y="575" width="5" height="1" fill="#F09090"/><rect x="22" y="578" width="5" height="3" fill="#208080"/><rect x="23" y="578" width="1" height="3" fill="#A0F0F0"/><rect x="25" y="578" width="1" height="3" fill="#A0F0F0"/><rect x="22" y="579" width="5" height="1" fill="#60D8D8"/></g>
<g shape-rendering="crispEdges"><rect x="307.5" y="533.5" width="9" height="11" fill="#00FFFF" stroke="#001818"/><rect x="310" y="536" width="5" height="3" fill="#E84848"/><rect x="310" y="537" width="5" height="1" fill="#F09090"/><rect x="310" y="540" width="5" height="3" fill="#208080"/><rect x="311" y="540" width="1" height="3" fill="#A0F0F0"/><rect x="313" y="540" width="1" height="3" fill="#A0F0F0"/><rect x="310" y="541" width="5" height="1" fill="#60D8D8"/></g>
<g shape-rendering="crispEdges"><rect x="329.5" y="604.5" width="9" height="11" fill="#00FFFF" stroke="#001818"/><rect x="332" y="607" width="5" height="3" fill="#E84848"/><rect x="332" y="608" width="5" height="1" fill="#F09090"/><rect x="332" y="611" width="5" height="3" fill="#208080"/><rect x="333" y="611" width="1" height="3" fill="#A0F0F0"/><rect x="335" y="611" width="1" height="3" fill="#A0F0F0"/><rect x="332" y="612" width="5" height="1" fill="#60D8D8"/></g>
<g shape-rendering="crispEdges"><rect x="404.5" y="604.5" width="9" height="11" fill="#00FFFF" stroke="#001818"/><rect x="407" y="607" width="5" height="3" fill="#E84848"/><rect x="407" y="608" width="5" height="1" fill="#F09090"/><rect x="407" y="611" width="5" height="3" fill="#208080"/><rect x="408" y="611" width="1" height="3" fill="#A0F0F0"/><rect x="410" y="611" width="1" height="3" fill="#A0F0F0"/><rect x="407" y="612" width="5" height="1" fill="#60D8D8"/></g>
<g shape-rendering="crispEdges"><rect x="482.5" y="604.5" width="9" height="11" fill="#00FFFF" stroke="#001818"/><rect x="485" y="607" width="5" height="3" fill="#E84848"/><rect x="485" y="608" width="5" height="1" fill="#F09090"/><rect x="485" y="611" width="5" height="3" fill="#208080"/><rect x="486" y="611" width="1" height="3" fill="#A0F0F0"/><rect x="488" y="611" width="1" height="3" fill="#A0F0F0"/><rect x="485" y="612" width="5" height="1" fill="#60D8D8"/></g>
<g shape-rendering="crispEdges"><rect x="570.5" y="628.5" width="9" height="11" fill="#00FFFF" stroke="#001818"/><rect x="573" y="631" width="5" height="3" fill="#E84848"/><rect x="573" y="632" width="5" height="1" fill="#F09090"/><rect x="573" y="635" width="5" height="3" fill="#208080"/><rect x="574" y="635" width="1" height="3" fill="#A0F0F0"/><rect x="576" y="635" width="1" height="3" fill="#A0F0F0"/><rect x="573" y="636" width="5" height="1" fill="#60D8D8"/></g>
<g shape-rendering="crispEdges"><rect x="650.5" y="387.5" width="9" height="11" fill="#00FFFF" stroke="#001818"/><rect x="653" y="390" width="5" height="3" fill="#E84848"/><rect x="653" y="391" width="5" height="1" fill="#F09090"/><rect x="653" y="394" width="5" height="3" fill="#208080"/><rect x="654" y="394" width="1" height="3" fill="#A0F0F0"/><rect x="656" y="394" width="1" height="3" fill="#A0F0F0"/><rect x="653" y="395" width="5" height="1" fill="#60D8D8"/></g>
<g shape-rendering="crispEdges"><rect x="752.5" y="493.5" width="9" height="11" fill="#00FFFF" stroke="#001818"/><rect x="755" y="496" width="5" height="3" fill="#E84848"/><rect x="755" y="497" width="5" height="1" fill="#F09090"/><rect x="755" y="500" width="5" height="3" fill="#208080"/><rect x="756" y="500" width="1" height="3" fill="#A0F0F0"/><rect x="758" y="500" width="1" height="3" fill="#A0F0F0"/><rect x="755" y="501" width="5" height="1" fill="#60D8D8"/></g>
<g shape-rendering="crispEdges"><rect x="700.5" y="577.5" width="9" height="11" fill="#00FFFF" stroke="#001818"/><rect x="703" y="580" width="5" height="3" fill="#E84848"/><rect x="703" y="581" width="5" height="1" fill="#F09090"/><rect x="703" y="584" width="5" height="3" fill="#208080"/><rect x="704" y="584" width="1" height="3" fill="#A0F0F0"/><rect x="706" y="584" width="1" height="3" fill="#A0F0F0"/><rect x="703" y="585" width="5" height="1" fill="#60D8D8"/></g>
<g shape-rendering="crispEdges"><rect x="838.5" y="539.5" width="9" height="11" fill="#00FFFF" stroke="#001818"/><rect x="841" y="542" width="5" height="3" fill="#E84848"/><rect x="841" y="543" width="5" height="1" fill="#F09090"/><rect x="841" y="546" width="5" height="3" fill="#208080"/><rect x="842" y="546" width="1" height="3" fill="#A0F0F0"/><rect x="844" y="546" width="1" height="3" fill="#A0F0F0"/><rect x="841" y="547" width="5" height="1" fill="#60D8D8"/></g>
<g shape-rendering="crispEdges"><rect x="882.5" y="618.5" width="9" height="11" fill="#00FFFF" stroke="#001818"/><rect x="885" y="621" width="5" height="3" fill="#E84848"/><rect x="885" y="622" width="5" height="1" fill="#F09090"/><rect x="885" y="625" width="5" height="3" fill="#208080"/><rect x="886" y="625" width="1" height="3" fill="#A0F0F0"/><rect x="888" y="625" width="1" height="3" fill="#A0F0F0"/><rect x="885" y="626" width="5" height="1" fill="#60D8D8"/></g>
<circle cx="109.5" cy="385.3" r="9.6" fill="#FF0000" stroke="#D8A0A0" stroke-width="0.8"/>
<rect x="105.5" y="383.3" width="8" height="4" fill="#fff"/>
<circle cx="25.7" cy="522.9" r="9.6" fill="#FF0000" stroke="#D8A0A0" stroke-width="0.8"/>
<rect x="21.7" y="520.9" width="8" height="4" fill="#fff"/>
<circle cx="18.7" cy="596.4" r="9.6" fill="#FF0000" stroke="#D8A0A0" stroke-width="0.8"/>
<rect x="14.7" y="594.4" width="8" height="4" fill="#fff"/>
<circle cx="707.5" cy="522.5" r="9.6" fill="#FF0000" stroke="#D8A0A0" stroke-width="0.8"/>
<rect x="703.5" y="520.5" width="8" height="4" fill="#fff"/>
<circle cx="788" cy="568" r="9.6" fill="#FF0000" stroke="#D8A0A0" stroke-width="0.8"/>
<rect x="784" y="566" width="8" height="4" fill="#fff"/>
<text x="95" y="72" font-family="Liberation Sans, sans-serif" font-size="10.4" font-weight="normal" fill="#fff" stroke="#fff" stroke-width="0.25" textLength="20.249999999999996" lengthAdjust="spacingAndGlyphs">211</text>
<text x="149.1" y="96.7" font-family="Liberation Sans, sans-serif" font-size="10.4" font-weight="normal" fill="#fff" stroke="#fff" stroke-width="0.25" textLength="13.399999999999999" lengthAdjust="spacingAndGlyphs">01</text>
<text x="139.4" y="134.3" font-family="Liberation Sans, sans-serif" font-size="10.4" font-weight="normal" fill="#fff" stroke="#fff" stroke-width="0.25" textLength="13.399999999999999" lengthAdjust="spacingAndGlyphs">02</text>
<text x="175.7" y="122.7" font-family="Liberation Sans, sans-serif" font-size="10.4" font-weight="normal" fill="#fff" stroke="#fff" stroke-width="0.25" textLength="20.249999999999996" lengthAdjust="spacingAndGlyphs">212</text>
<text x="137.8" y="171.9" font-family="Liberation Sans, sans-serif" font-size="10.4" font-weight="normal" fill="#fff" stroke="#fff" stroke-width="0.25" textLength="20.249999999999996" lengthAdjust="spacingAndGlyphs">228</text>
<text x="200.2" y="208.1" font-family="Liberation Sans, sans-serif" font-size="10.4" font-weight="normal" fill="#fff" stroke="#fff" stroke-width="0.25" textLength="13.399999999999999" lengthAdjust="spacingAndGlyphs">15</text>
<text x="226.7" y="208.1" font-family="Liberation Sans, sans-serif" font-size="10.4" font-weight="normal" fill="#fff" stroke="#fff" stroke-width="0.25" textLength="13.399999999999999" lengthAdjust="spacingAndGlyphs">14</text>
<text x="306.7" y="149.7" font-family="Liberation Sans, sans-serif" font-size="10.4" font-weight="normal" fill="#fff" stroke="#fff" stroke-width="0.25" textLength="20.249999999999996" lengthAdjust="spacingAndGlyphs">213</text>
<text x="177.1" y="280.4" font-family="Liberation Sans, sans-serif" font-size="10.4" font-weight="normal" fill="#fff" stroke="#fff" stroke-width="0.25" textLength="20.249999999999996" lengthAdjust="spacingAndGlyphs">214</text>
<text x="247.9" y="280.4" font-family="Liberation Sans, sans-serif" font-size="10.4" font-weight="normal" fill="#fff" stroke="#fff" stroke-width="0.25" textLength="20.249999999999996" lengthAdjust="spacingAndGlyphs">215</text>
<text x="317.3" y="280.4" font-family="Liberation Sans, sans-serif" font-size="10.4" font-weight="normal" fill="#fff" stroke="#fff" stroke-width="0.25" textLength="20.249999999999996" lengthAdjust="spacingAndGlyphs">216</text>
<text x="160.7" y="320.7" font-family="Liberation Sans, sans-serif" font-size="10.4" font-weight="normal" fill="#fff" stroke="#fff" stroke-width="0.25" textLength="20.249999999999996" lengthAdjust="spacingAndGlyphs">218</text>
<text x="93" y="278.7" font-family="Liberation Sans, sans-serif" font-size="10.4" font-weight="normal" fill="#fff" stroke="#fff" stroke-width="0.25" textLength="20.249999999999996" lengthAdjust="spacingAndGlyphs">258</text>
<text x="95.9" y="364.7" font-family="Liberation Sans, sans-serif" font-size="10.4" font-weight="normal" fill="#fff" stroke="#fff" stroke-width="0.25" textLength="20.249999999999996" lengthAdjust="spacingAndGlyphs">209</text>
<text x="121.8" y="429.8" font-family="Liberation Sans, sans-serif" font-size="10.4" font-weight="normal" fill="#fff" stroke="#fff" stroke-width="0.25" textLength="13.399999999999999" lengthAdjust="spacingAndGlyphs">17</text>
<text x="199.8" y="429.8" font-family="Liberation Sans, sans-serif" font-size="10.4" font-weight="normal" fill="#fff" stroke="#fff" stroke-width="0.25" textLength="13.399999999999999" lengthAdjust="spacingAndGlyphs">16</text>
<text x="107.3" y="471.8" font-family="Liberation Sans, sans-serif" font-size="10.4" font-weight="normal" fill="#fff" stroke="#fff" stroke-width="0.25" textLength="20.249999999999996" lengthAdjust="spacingAndGlyphs">210</text>
<text x="12.1" y="451.9" font-family="Liberation Sans, sans-serif" font-size="10.4" font-weight="normal" fill="#fff" stroke="#fff" stroke-width="0.25" textLength="20.249999999999996" lengthAdjust="spacingAndGlyphs">247</text>
<text x="24.6" y="502.6" font-family="Liberation Sans, sans-serif" font-size="10.4" font-weight="normal" fill="#fff" stroke="#fff" stroke-width="0.25" textLength="20.249999999999996" lengthAdjust="spacingAndGlyphs">245</text>
<text x="36.1" y="597.7" font-family="Liberation Sans, sans-serif" font-size="10.4" font-weight="normal" fill="#fff" stroke="#fff" stroke-width="0.25" textLength="20.249999999999996" lengthAdjust="spacingAndGlyphs">208</text>
<text x="249" y="364.5" font-family="Liberation Sans, sans-serif" font-size="10.4" font-weight="normal" fill="#fff" stroke="#fff" stroke-width="0.25" textLength="20.249999999999996" lengthAdjust="spacingAndGlyphs">222</text>
<text x="343" y="364.5" font-family="Liberation Sans, sans-serif" font-size="10.4" font-weight="normal" fill="#fff" stroke="#fff" stroke-width="0.25" textLength="20.249999999999996" lengthAdjust="spacingAndGlyphs">223</text>
<text x="343" y="389.4" font-family="Liberation Sans, sans-serif" font-size="10.4" font-weight="normal" fill="#fff" stroke="#fff" stroke-width="0.25" textLength="20.249999999999996" lengthAdjust="spacingAndGlyphs">224</text>
<text x="343.9" y="462.8" font-family="Liberation Sans, sans-serif" font-size="10.4" font-weight="normal" fill="#fff" stroke="#fff" stroke-width="0.25" textLength="20.249999999999996" lengthAdjust="spacingAndGlyphs">259</text>
<text x="280.8" y="559.2" font-family="Liberation Sans, sans-serif" font-size="10.4" font-weight="normal" fill="#fff" stroke="#fff" stroke-width="0.25" textLength="20.249999999999996" lengthAdjust="spacingAndGlyphs">231</text>
<text x="301.9" y="629.9" font-family="Liberation Sans, sans-serif" font-size="10.4" font-weight="normal" fill="#fff" stroke="#fff" stroke-width="0.25" textLength="20.249999999999996" lengthAdjust="spacingAndGlyphs">237</text>
<text x="377" y="629.9" font-family="Liberation Sans, sans-serif" font-size="10.4" font-weight="normal" fill="#fff" stroke="#fff" stroke-width="0.25" textLength="20.249999999999996" lengthAdjust="spacingAndGlyphs">227</text>
<text x="455.2" y="629.9" font-family="Liberation Sans, sans-serif" font-size="10.4" font-weight="normal" fill="#fff" stroke="#fff" stroke-width="0.25" textLength="20.249999999999996" lengthAdjust="spacingAndGlyphs">235</text>
<text x="405" y="93.7" font-family="Liberation Sans, sans-serif" font-size="10.4" font-weight="normal" fill="#fff" stroke="#fff" stroke-width="0.25" textLength="20.249999999999996" lengthAdjust="spacingAndGlyphs">238</text>
<text x="501.7" y="93.7" font-family="Liberation Sans, sans-serif" font-size="10.4" font-weight="normal" fill="#fff" stroke="#fff" stroke-width="0.25" textLength="20.249999999999996" lengthAdjust="spacingAndGlyphs">236</text>
<text x="548.4" y="93.9" font-family="Liberation Sans, sans-serif" font-size="10.4" font-weight="normal" fill="#fff" stroke="#fff" stroke-width="0.25" textLength="20.249999999999996" lengthAdjust="spacingAndGlyphs">232</text>
<text x="427.8" y="162.8" font-family="Liberation Sans, sans-serif" font-size="10.4" font-weight="normal" fill="#fff" stroke="#fff" stroke-width="0.25" textLength="20.249999999999996" lengthAdjust="spacingAndGlyphs">254</text>
<text x="480.7" y="162.8" font-family="Liberation Sans, sans-serif" font-size="10.4" font-weight="normal" fill="#fff" stroke="#fff" stroke-width="0.25" textLength="20.249999999999996" lengthAdjust="spacingAndGlyphs">255</text>
<text x="574" y="153" font-family="Liberation Sans, sans-serif" font-size="10.4" font-weight="normal" fill="#fff" stroke="#fff" stroke-width="0.25" textLength="20.249999999999996" lengthAdjust="spacingAndGlyphs">233</text>
<text x="582.4" y="264.6" font-family="Liberation Sans, sans-serif" font-size="10.4" font-weight="normal" fill="#fff" stroke="#fff" stroke-width="0.25" textLength="13.399999999999999" lengthAdjust="spacingAndGlyphs">12</text>
<text x="492.1" y="332.2" font-family="Liberation Sans, sans-serif" font-size="10.4" font-weight="normal" fill="#fff" stroke="#fff" stroke-width="0.25" textLength="20.249999999999996" lengthAdjust="spacingAndGlyphs">225</text>
<text x="595.4" y="436.2" font-family="Liberation Sans, sans-serif" font-size="10.4" font-weight="normal" fill="#fff" stroke="#fff" stroke-width="0.25" textLength="20.249999999999996" lengthAdjust="spacingAndGlyphs">226</text>
<text x="466.8" y="460.7" font-family="Liberation Sans, sans-serif" font-size="10.4" font-weight="normal" fill="#fff" stroke="#fff" stroke-width="0.25" textLength="20.249999999999996" lengthAdjust="spacingAndGlyphs">298</text>
<text x="673.9" y="415.8" font-family="Liberation Sans, sans-serif" font-size="10.4" font-weight="normal" fill="#fff" stroke="#fff" stroke-width="0.25" textLength="20.249999999999996" lengthAdjust="spacingAndGlyphs">234</text>
<text x="694.4" y="335.6" font-family="Liberation Sans, sans-serif" font-size="10.4" font-weight="normal" fill="#fff" stroke="#fff" stroke-width="0.25" textLength="20.249999999999996" lengthAdjust="spacingAndGlyphs">248</text>
<text x="692.8" y="254.8" font-family="Liberation Sans, sans-serif" font-size="10.4" font-weight="normal" fill="#fff" stroke="#fff" stroke-width="0.25" textLength="20.249999999999996" lengthAdjust="spacingAndGlyphs">249</text>
<text x="673.3" y="71.8" font-family="Liberation Sans, sans-serif" font-size="10.4" font-weight="normal" fill="#fff" stroke="#fff" stroke-width="0.25" textLength="20.249999999999996" lengthAdjust="spacingAndGlyphs">241</text>
<text x="743.3" y="71.8" font-family="Liberation Sans, sans-serif" font-size="10.4" font-weight="normal" fill="#fff" stroke="#fff" stroke-width="0.25" textLength="20.249999999999996" lengthAdjust="spacingAndGlyphs">246</text>
<text x="660.9" y="144.7" font-family="Liberation Sans, sans-serif" font-size="10.4" font-weight="normal" fill="#fff" stroke="#fff" stroke-width="0.25" textLength="13.399999999999999" lengthAdjust="spacingAndGlyphs">05</text>
<text x="718" y="144.7" font-family="Liberation Sans, sans-serif" font-size="10.4" font-weight="normal" fill="#fff" stroke="#fff" stroke-width="0.25" textLength="13.399999999999999" lengthAdjust="spacingAndGlyphs">06</text>
<text x="789.1" y="143.6" font-family="Liberation Sans, sans-serif" font-size="10.4" font-weight="normal" fill="#fff" stroke="#fff" stroke-width="0.25" textLength="13.399999999999999" lengthAdjust="spacingAndGlyphs">07</text>
<text x="823" y="99" font-family="Liberation Sans, sans-serif" font-size="10.4" font-weight="normal" fill="#fff" stroke="#fff" stroke-width="0.25" textLength="13.399999999999999" lengthAdjust="spacingAndGlyphs">08</text>
<text x="868.9" y="99" font-family="Liberation Sans, sans-serif" font-size="10.4" font-weight="normal" fill="#fff" stroke="#fff" stroke-width="0.25" textLength="13.399999999999999" lengthAdjust="spacingAndGlyphs">09</text>
<text x="813.7" y="130.7" font-family="Liberation Sans, sans-serif" font-size="10.4" font-weight="normal" fill="#fff" stroke="#fff" stroke-width="0.25" textLength="13.399999999999999" lengthAdjust="spacingAndGlyphs">18</text>
<text x="796.1" y="168.6" font-family="Liberation Sans, sans-serif" font-size="10.4" font-weight="normal" fill="#fff" stroke="#fff" stroke-width="0.25" textLength="20.249999999999996" lengthAdjust="spacingAndGlyphs">250</text>
<text x="831.2" y="166.1" font-family="Liberation Sans, sans-serif" font-size="10.4" font-weight="normal" fill="#fff" stroke="#fff" stroke-width="0.25" textLength="20.249999999999996" lengthAdjust="spacingAndGlyphs">251</text>
<text x="845.2" y="186" font-family="Liberation Sans, sans-serif" font-size="10.4" font-weight="normal" fill="#fff" stroke="#fff" stroke-width="0.25" textLength="20.249999999999996" lengthAdjust="spacingAndGlyphs">253</text>
<text x="640.2" y="235.4" font-family="Liberation Sans, sans-serif" font-size="10.4" font-weight="normal" fill="#fff" stroke="#fff" stroke-width="0.25" textLength="20.249999999999996" lengthAdjust="spacingAndGlyphs">253</text>
<text x="650.3" y="182.8" font-family="Liberation Sans, sans-serif" font-size="10.4" font-weight="normal" fill="#fff" stroke="#fff" stroke-width="0.25" textLength="20.249999999999996" lengthAdjust="spacingAndGlyphs">242</text>
<text x="706.3" y="502.7" font-family="Liberation Sans, sans-serif" font-size="10.4" font-weight="normal" fill="#fff" stroke="#fff" stroke-width="0.25" textLength="20.249999999999996" lengthAdjust="spacingAndGlyphs">244</text>
<text x="747.2" y="552.8" font-family="Liberation Sans, sans-serif" font-size="10.4" font-weight="normal" fill="#fff" stroke="#fff" stroke-width="0.25" textLength="20.249999999999996" lengthAdjust="spacingAndGlyphs">243</text>
<text x="809.5" y="570.3" font-family="Liberation Sans, sans-serif" font-size="10.4" font-weight="normal" fill="#fff" stroke="#fff" stroke-width="0.25" textLength="20.249999999999996" lengthAdjust="spacingAndGlyphs">230</text>
<text x="593.2" y="604.6" font-family="Liberation Sans, sans-serif" font-size="10.4" font-weight="normal" fill="#fff" stroke="#fff" stroke-width="0.25" textLength="20.249999999999996" lengthAdjust="spacingAndGlyphs">240</text>
<clipPath id="c229"><rect x="850" y="630" width="40" height="13.7"/></clipPath><g clip-path="url(#c229)">
<text x="855" y="644.2" font-family="Liberation Sans, sans-serif" font-size="10.4" font-weight="normal" fill="#fff" stroke="#fff" stroke-width="0.25" textLength="20.249999999999996" lengthAdjust="spacingAndGlyphs">229</text>
</g>
<text x="616" y="135.4" font-family="Liberation Sans, sans-serif" font-size="10.4" font-weight="normal" fill="#fff" stroke="#fff" stroke-width="0.25" textLength="33" lengthAdjust="spacingAndGlyphs">233-1</text>
<text x="46.7" y="170.7" font-family="Liberation Sans, sans-serif" font-size="10" font-weight="normal" font-style="normal" fill="#E8F2F2" text-anchor="start" textLength="28.6" lengthAdjust="spacingAndGlyphs">из 207</text>
<text x="247.3" y="202.7" font-family="Liberation Sans, sans-serif" font-size="10" font-weight="normal" font-style="normal" fill="#E8F2F2" text-anchor="start" textLength="24.4" lengthAdjust="spacingAndGlyphs">М.фр.</text>
<text x="595.7" y="281.3" font-family="Liberation Sans, sans-serif" font-size="10" font-weight="normal" font-style="normal" fill="#E8F2F2" text-anchor="start" textLength="23" lengthAdjust="spacingAndGlyphs">в 237</text>
<text x="427.1" y="442.8" font-family="Liberation Sans, sans-serif" font-size="10" font-weight="normal" font-style="normal" fill="#E8F2F2" text-anchor="start" textLength="24.1" lengthAdjust="spacingAndGlyphs">лузга</text>
<text x="641" y="520" font-family="Liberation Sans, sans-serif" font-size="10" font-weight="normal" font-style="normal" fill="#E8F2F2" text-anchor="start" textLength="24" lengthAdjust="spacingAndGlyphs">в 237</text>
<text x="810.1" y="515.5" font-family="Liberation Sans, sans-serif" font-size="10" font-weight="normal" font-style="normal" fill="#E8F2F2" text-anchor="start" textLength="38.5" lengthAdjust="spacingAndGlyphs">бункеры</text>
<text x="810.1" y="526.1" font-family="Liberation Sans, sans-serif" font-size="10" font-weight="normal" font-style="normal" fill="#E8F2F2" text-anchor="start" textLength="48.2" lengthAdjust="spacingAndGlyphs">гот.пр-ции</text>
<rect x="0" y="646.5" width="900" height="28.5" fill="#ECE9D8"/>
<rect x="0" y="646.5" width="900" height="1.5" fill="#FFFFFF"/><rect x="1" y="648" width="898" height="1" fill="#B2AE9E"/>
<rect x="0" y="647" width="1" height="28" fill="#FFFFFF"/><rect x="1" y="648" width="1" height="25" fill="#A6A498"/>
<rect x="149" y="649" width="1" height="24" fill="#FFFFFF"/><rect x="150" y="649" width="1" height="24" fill="#A6A498"/>
<rect x="2" y="673" width="897" height="1" fill="#FFFFFF"/><rect x="898" y="649" width="1" height="25" fill="#FFFFFF"/>
<rect x="0" y="674" width="900" height="1" fill="#D4D0C4"/>
</svg></body></html>
